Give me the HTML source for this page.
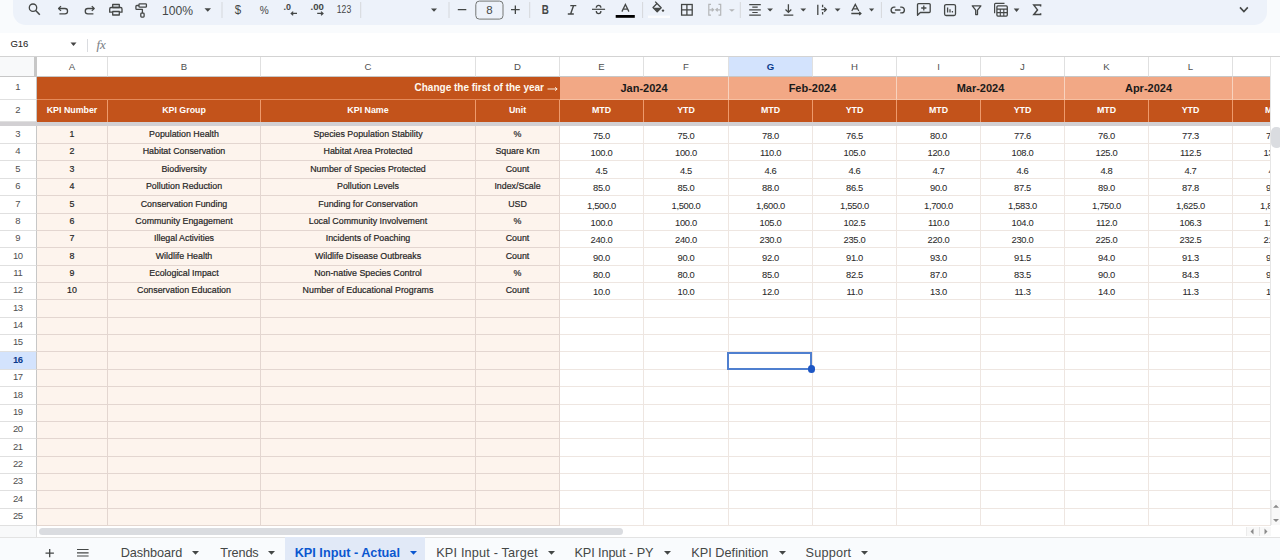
<!DOCTYPE html><html><head><meta charset="utf-8"><style>
*{margin:0;padding:0;box-sizing:border-box}
html,body{width:1280px;height:560px;overflow:hidden;background:#fff;font-family:"Liberation Sans",sans-serif;position:relative}
.ab{position:absolute}
.c{position:absolute;display:flex;align-items:center;justify-content:center;white-space:nowrap;overflow:hidden}
.ico{position:absolute}
.t{-webkit-text-stroke:0.2px #262626}
#grid{position:absolute;left:0;top:0;width:1271px;height:526px;overflow:hidden}
</style></head><body>
<div class="ab" style="left:0;top:0;width:1280px;height:33px;background:#f9fbfd"></div>
<div class="ab" style="left:13px;top:-20px;width:1254px;height:45px;background:#edf2fa;border-radius:13px"></div>
<svg class="ico" style="left:0;top:0" width="1280" height="25" viewBox="0 0 1280 25"><g fill="none" stroke="#444746" stroke-width="1.3" stroke-linecap="butt" stroke-linejoin="round"><circle cx="33" cy="7.7" r="3.7"/><path d="M35.7 10.4L39.8 14.8" stroke-width="1.5"/><path d="M58.8 8.5H64.9A2.65 2.65 0 0 1 64.9 13.8H59.4"/><path d="M61 6.1L58.6 8.5L61 10.9"/><g transform="translate(152.8 0) scale(-1 1)"><path d="M58.8 8.5H64.9A2.65 2.65 0 0 1 64.9 13.8H59.4"/><path d="M61 6.1L58.6 8.5L61 10.9"/></g><rect x="112.7" y="4.5" width="6.6" height="3" /><path d="M112.2 12.2H109.7V8.9A1.4 1.4 0 0 1 111.1 7.5H120.6A1.4 1.4 0 0 1 122 8.9V12.2H119.5"/><rect x="112.7" y="11.5" width="6.6" height="3.5"/><rect x="139" y="3.8" width="7.4" height="3.4" rx="0.8"/><path d="M139 5.5H136.8A0.9 0.9 0 0 0 135.9 6.4V8.5A0.9 0.9 0 0 0 136.8 9.4H142.4V13"/><rect x="140.8" y="13.2" width="3.3" height="3.9" rx="0.8"/></g><text x="162" y="15" font-size="12.2" fill="#444746" font-family="Liberation Sans" textLength="31" lengthAdjust="spacingAndGlyphs">100%</text><path d="M204.5 8.3H211L207.75 11.8Z" fill="#444746"/><rect x="221.5" y="2" width="1" height="16" fill="#d5d7db"/><text x="234.8" y="14" font-size="12" fill="#444746" font-family="Liberation Sans" textLength="6.4" lengthAdjust="spacingAndGlyphs">$</text><text x="259.8" y="13.5" font-size="10.5" fill="#444746" font-family="Liberation Sans" textLength="9" lengthAdjust="spacingAndGlyphs">%</text><text x="283.5" y="10.4" font-size="9.5" font-weight="bold" fill="#444746" font-family="Liberation Sans" textLength="7.5" lengthAdjust="spacingAndGlyphs">.0</text><path d="M297 13.4H291.2M293.2 11.6L291.2 13.4L293.2 15.2" stroke="#444746" stroke-width="1.2" fill="none"/><text x="310.5" y="10.4" font-size="9.5" font-weight="bold" fill="#444746" font-family="Liberation Sans" textLength="13.4" lengthAdjust="spacingAndGlyphs">.00</text><path d="M317.2 13.4H323M321 11.6L323 13.4L321 15.2" stroke="#444746" stroke-width="1.2" fill="none"/><text x="336.8" y="13" font-size="10" fill="#444746" font-family="Liberation Sans" textLength="14.4" lengthAdjust="spacingAndGlyphs">123</text><rect x="360.2" y="2" width="1" height="16" fill="#d5d7db"/><path d="M431 8.5H437L434.0 11.8Z" fill="#444746"/><rect x="448.5" y="2" width="1" height="16" fill="#d5d7db"/><path d="M457.8 9.7H466.3M511 9.7H519.7M515.35 5.4V14" stroke="#444746" stroke-width="1.3"/><rect x="475.8" y="1.1" width="27.2" height="18" rx="3.5" fill="none" stroke="#747775" stroke-width="1"/><text x="489.4" y="14" font-size="11.5" fill="#444746" font-family="Liberation Sans" text-anchor="middle">8</text><rect x="529.2" y="2" width="1" height="16" fill="#d5d7db"/><text x="541.8" y="13.9" font-size="12.4" font-weight="bold" fill="#444746" font-family="Liberation Sans" textLength="7.1" lengthAdjust="spacingAndGlyphs">B</text><path d="M570.3 5.6H576.3M567.8 14H573.8M573.6 5.6L570.6 14" stroke="#444746" stroke-width="1.4" fill="none"/><path d="M592 9.3H605.1" stroke="#444746" stroke-width="1.2"/><path d="M596.3 7.7A2.3 2.3 0 0 1 600.9 7.7M596.3 11A2.3 2.6 0 0 0 600.9 11" stroke="#444746" stroke-width="1.3" fill="none"/><path d="M621.9 11.6L625.4 4.4L628.9 11.6M623.2 9.1H627.6" stroke="#444746" stroke-width="1.3" fill="none"/><rect x="615.7" y="15" width="19.1" height="2.8" fill="#000"/><rect x="642.1" y="2" width="1" height="16" fill="#d5d7db"/><path d="M655.2 1.6L657.3 3.7M653 7.5L657 3.5L661.2 7.7L657.2 11.7Z" stroke="#444746" stroke-width="1.3" fill="none" stroke-linejoin="round"/><path d="M653.4 7.8H660.9L657.2 11.5Z" fill="#444746"/><circle cx="663" cy="10.6" r="1.2" fill="#444746"/><rect x="648" y="15.6" width="22" height="2.4" fill="#fbfcfe"/><rect x="681.6" y="4.5" width="10.6" height="10.6" stroke="#444746" stroke-width="1.3" fill="none"/><path d="M686.9 4.5V15.1M681.6 9.8H692.2" stroke="#444746" stroke-width="1.3"/><path d="M711 4.4H708.8V15.2H711M718.5 4.4H720.7V15.2H718.5M709.5 9.8H713.5M711.8 8.2L713.6 9.8L711.8 11.4M720 9.8H716M717.7 8.2L715.9 9.8L717.7 11.4" stroke="#b4b6b8" stroke-width="1.2" fill="none"/><path d="M729 9.3H734.8L731.9 11.8Z" fill="#b4b6b8"/><rect x="739.8" y="2" width="1" height="16" fill="#d5d7db"/><path d="M749.2 4.6H760.8M752.3 7.1H757.7M749.2 9.8H760.8M752.3 12.5H757.7M749.2 15.1H760.8" stroke="#444746" stroke-width="1.2"/><path d="M767.2 8.4H773L770.1 11.6Z" fill="#444746"/><path d="M788.4 4.2V12.3M785.5 9.5L788.4 12.4L791.3 9.5M783.7 15.2H793.3" stroke="#444746" stroke-width="1.3" fill="none"/><path d="M800.4 8.4H806.2L803.3 11.6Z" fill="#444746"/><path d="M817.8 4.7V14.9M821.5 9.6H826.2M824.2 7.5L826.3 9.6L824.2 11.7M822.6 4.8V7.2M822.6 12V14.6" stroke="#444746" stroke-width="1.3" fill="none"/><path d="M834.7 8.4H840.5L837.6 11.6Z" fill="#444746"/><path d="M851.8 11L855.3 4.4L858.8 11M853 8.9H857.6M851.3 13.5H860.8M859.2 11.9L860.9 13.5L859.2 15.1" stroke="#444746" stroke-width="1.3" fill="none"/><path d="M869 8.4H874.2L871.6 11.6Z" fill="#444746"/><rect x="880.9" y="2" width="1" height="16" fill="#d5d7db"/><path d="M895.4 7.1H894A2.85 2.85 0 0 0 894 12.9H895.4M900.2 7.1H901.5A2.85 2.85 0 0 1 901.5 12.9H900.2M894.9 10H900.5" stroke="#444746" stroke-width="1.4" fill="none"/><path d="M917.5 15.3V4.7A1 1 0 0 1 918.5 3.7H929.2A1 1 0 0 1 930.2 4.7V11.5A1 1 0 0 1 929.2 12.5H920.3Z" stroke="#444746" stroke-width="1.3" fill="none" stroke-linejoin="round"/><path d="M923.8 5.4V10.6M921.2 8H926.4" stroke="#444746" stroke-width="1.3"/><rect x="944.6" y="4.6" width="10.9" height="10.9" rx="1.5" stroke="#444746" stroke-width="1.3" fill="none"/><path d="M947.6 7.6V12.6M950 9.3V12.6M952.4 11V12.6" stroke="#444746" stroke-width="1.3"/><path d="M972.3 5.8H980.9L977.5 10.2V14.6H975.7V10.2Z" stroke="#444746" stroke-width="1.3" fill="none" stroke-linejoin="round"/><path d="M994.6 13.2V4.3A0.9 0.9 0 0 1 995.5 3.4H1004.5" stroke="#444746" stroke-width="1.2" fill="none"/><rect x="996.9" y="5.9" width="10.4" height="10.2" rx="1" stroke="#444746" stroke-width="1.3" fill="none"/><path d="M997 9.1H1007.2M1000.3 9.1V16M1003.8 9.1V16M997 12.6H1007.2" stroke="#444746" stroke-width="1.1"/><path d="M1013.75 8.5H1019.4L1016.575 11.9Z" fill="#444746"/><path d="M1040.6 6.4V5.1H1033.8L1037.5 9.9L1033.8 14.6H1040.6V13.3" stroke="#444746" stroke-width="1.5" fill="none" stroke-linejoin="miter"/><path d="M1240 7.4L1243.9 11.5L1247.8 7.4" stroke="#444746" stroke-width="1.6" fill="none"/></svg>
<div class="ab" style="left:0;top:33px;width:1280px;height:24px;background:#fff;border-bottom:1px solid #d3d3d3"></div>
<div class="ab" style="left:10.5px;top:37.5px;font-size:9.6px;line-height:12px;color:#1f1f1f;-webkit-text-stroke:0.05px #1f1f1f;letter-spacing:-0.1px">G16</div>
<svg class="ico" style="left:70px;top:42px" width="7" height="5" viewBox="0 0 7 5"><path d="M0.5 0.5h6L3.5 4z" fill="#444"/></svg>
<div class="ab" style="left:87px;top:39px;width:1px;height:13px;background:#dadce0"></div>
<div class="ab" style="left:96.5px;top:37.5px;font-size:13px;line-height:14px;color:#7d8288;font-family:'Liberation Serif',serif;font-style:italic;letter-spacing:0px;-webkit-text-stroke:0.1px #7d8288">fx</div>
<div id="grid">
<div class="ab" style="left:0;top:57px;width:37px;height:20px;background:#f8f9fa;border-bottom:1px solid #c7c7c7"></div>
<div class="ab" style="left:34px;top:57px;width:3px;height:20px;background:#c7c7c7"></div>
<div class="c" style="left:37px;top:57px;width:71px;height:20px;background:#fff;border-right:1px solid #e0e0e0;border-bottom:1px solid #c7c7c7;font-size:9.6px;color:#505050;font-weight:normal;padding-top:0px">A</div>
<div class="c" style="left:108px;top:57px;width:153px;height:20px;background:#fff;border-right:1px solid #e0e0e0;border-bottom:1px solid #c7c7c7;font-size:9.6px;color:#505050;font-weight:normal;padding-top:0px">B</div>
<div class="c" style="left:261px;top:57px;width:215px;height:20px;background:#fff;border-right:1px solid #e0e0e0;border-bottom:1px solid #c7c7c7;font-size:9.6px;color:#505050;font-weight:normal;padding-top:0px">C</div>
<div class="c" style="left:476px;top:57px;width:84px;height:20px;background:#fff;border-right:1px solid #e0e0e0;border-bottom:1px solid #c7c7c7;font-size:9.6px;color:#505050;font-weight:normal;padding-top:0px">D</div>
<div class="c" style="left:560px;top:57px;width:84px;height:20px;background:#fff;border-right:1px solid #e0e0e0;border-bottom:1px solid #c7c7c7;font-size:9.6px;color:#505050;font-weight:normal;padding-top:0px">E</div>
<div class="c" style="left:644px;top:57px;width:85px;height:20px;background:#fff;border-right:1px solid #e0e0e0;border-bottom:1px solid #c7c7c7;font-size:9.6px;color:#505050;font-weight:normal;padding-top:0px">F</div>
<div class="c" style="left:729px;top:57px;width:84px;height:20px;background:#d3e3fd;border-right:1px solid #e0e0e0;border-bottom:1px solid #c7c7c7;font-size:9.6px;color:#0b3a8c;font-weight:bold;padding-top:0px">G</div>
<div class="c" style="left:813px;top:57px;width:84px;height:20px;background:#fff;border-right:1px solid #e0e0e0;border-bottom:1px solid #c7c7c7;font-size:9.6px;color:#505050;font-weight:normal;padding-top:0px">H</div>
<div class="c" style="left:897px;top:57px;width:84px;height:20px;background:#fff;border-right:1px solid #e0e0e0;border-bottom:1px solid #c7c7c7;font-size:9.6px;color:#505050;font-weight:normal;padding-top:0px">I</div>
<div class="c" style="left:981px;top:57px;width:84px;height:20px;background:#fff;border-right:1px solid #e0e0e0;border-bottom:1px solid #c7c7c7;font-size:9.6px;color:#505050;font-weight:normal;padding-top:0px">J</div>
<div class="c" style="left:1065px;top:57px;width:84px;height:20px;background:#fff;border-right:1px solid #e0e0e0;border-bottom:1px solid #c7c7c7;font-size:9.6px;color:#505050;font-weight:normal;padding-top:0px">K</div>
<div class="c" style="left:1149px;top:57px;width:84px;height:20px;background:#fff;border-right:1px solid #e0e0e0;border-bottom:1px solid #c7c7c7;font-size:9.6px;color:#505050;font-weight:normal;padding-top:0px">L</div>
<div class="c" style="left:1233px;top:57px;width:84px;height:20px;background:#fff;border-right:1px solid #e0e0e0;border-bottom:1px solid #c7c7c7;font-size:9.6px;color:#505050;font-weight:normal;padding-top:0px">M</div>
<div class="c" style="left:0;top:77px;width:37px;height:23px;background:#fff;border-right:1px solid #c7c7c7;border-bottom:1px solid #e0e0e0;font-size:9.5px;letter-spacing:-0.4px;text-indent:-0.4px;color:#505050;font-weight:normal;padding-bottom:3px">1</div>
<div class="c" style="left:0;top:100px;width:37px;height:22px;background:#fff;border-right:1px solid #c7c7c7;border-bottom:1px solid #e0e0e0;font-size:9.5px;letter-spacing:-0.4px;text-indent:-0.4px;color:#505050;font-weight:normal;padding-bottom:3px">2</div>
<div class="c" style="left:0;top:126px;width:37px;height:18px;background:#fff;border-right:1px solid #c7c7c7;border-bottom:1px solid #e0e0e0;font-size:9.5px;letter-spacing:-0.4px;text-indent:-0.4px;color:#505050;font-weight:normal;padding-bottom:3px">3</div>
<div class="c" style="left:0;top:144px;width:37px;height:17px;background:#fff;border-right:1px solid #c7c7c7;border-bottom:1px solid #e0e0e0;font-size:9.5px;letter-spacing:-0.4px;text-indent:-0.4px;color:#505050;font-weight:normal;padding-bottom:3px">4</div>
<div class="c" style="left:0;top:161px;width:37px;height:18px;background:#fff;border-right:1px solid #c7c7c7;border-bottom:1px solid #e0e0e0;font-size:9.5px;letter-spacing:-0.4px;text-indent:-0.4px;color:#505050;font-weight:normal;padding-bottom:3px">5</div>
<div class="c" style="left:0;top:179px;width:37px;height:17px;background:#fff;border-right:1px solid #c7c7c7;border-bottom:1px solid #e0e0e0;font-size:9.5px;letter-spacing:-0.4px;text-indent:-0.4px;color:#505050;font-weight:normal;padding-bottom:3px">6</div>
<div class="c" style="left:0;top:196px;width:37px;height:18px;background:#fff;border-right:1px solid #c7c7c7;border-bottom:1px solid #e0e0e0;font-size:9.5px;letter-spacing:-0.4px;text-indent:-0.4px;color:#505050;font-weight:normal;padding-bottom:3px">7</div>
<div class="c" style="left:0;top:214px;width:37px;height:17px;background:#fff;border-right:1px solid #c7c7c7;border-bottom:1px solid #e0e0e0;font-size:9.5px;letter-spacing:-0.4px;text-indent:-0.4px;color:#505050;font-weight:normal;padding-bottom:3px">8</div>
<div class="c" style="left:0;top:231px;width:37px;height:17px;background:#fff;border-right:1px solid #c7c7c7;border-bottom:1px solid #e0e0e0;font-size:9.5px;letter-spacing:-0.4px;text-indent:-0.4px;color:#505050;font-weight:normal;padding-bottom:3px">9</div>
<div class="c" style="left:0;top:248px;width:37px;height:18px;background:#fff;border-right:1px solid #c7c7c7;border-bottom:1px solid #e0e0e0;font-size:9.5px;letter-spacing:-0.4px;text-indent:-0.4px;color:#505050;font-weight:normal;padding-bottom:3px">10</div>
<div class="c" style="left:0;top:266px;width:37px;height:17px;background:#fff;border-right:1px solid #c7c7c7;border-bottom:1px solid #e0e0e0;font-size:9.5px;letter-spacing:-0.4px;text-indent:-0.4px;color:#505050;font-weight:normal;padding-bottom:3px">11</div>
<div class="c" style="left:0;top:283px;width:37px;height:17px;background:#fff;border-right:1px solid #c7c7c7;border-bottom:1px solid #e0e0e0;font-size:9.5px;letter-spacing:-0.4px;text-indent:-0.4px;color:#505050;font-weight:normal;padding-bottom:3px">12</div>
<div class="c" style="left:0;top:300px;width:37px;height:18px;background:#fff;border-right:1px solid #c7c7c7;border-bottom:1px solid #e0e0e0;font-size:9.5px;letter-spacing:-0.4px;text-indent:-0.4px;color:#505050;font-weight:normal;padding-bottom:3px">13</div>
<div class="c" style="left:0;top:318px;width:37px;height:17px;background:#fff;border-right:1px solid #c7c7c7;border-bottom:1px solid #e0e0e0;font-size:9.5px;letter-spacing:-0.4px;text-indent:-0.4px;color:#505050;font-weight:normal;padding-bottom:3px">14</div>
<div class="c" style="left:0;top:335px;width:37px;height:17px;background:#fff;border-right:1px solid #c7c7c7;border-bottom:1px solid #e0e0e0;font-size:9.5px;letter-spacing:-0.4px;text-indent:-0.4px;color:#505050;font-weight:normal;padding-bottom:3px">15</div>
<div class="c" style="left:0;top:352px;width:37px;height:18px;background:#d3e3fd;border-right:1px solid #c7c7c7;border-bottom:1px solid #e0e0e0;font-size:9.5px;letter-spacing:-0.4px;text-indent:-0.4px;color:#0b3a8c;font-weight:bold;padding-bottom:3px">16</div>
<div class="c" style="left:0;top:370px;width:37px;height:17px;background:#fff;border-right:1px solid #c7c7c7;border-bottom:1px solid #e0e0e0;font-size:9.5px;letter-spacing:-0.4px;text-indent:-0.4px;color:#505050;font-weight:normal;padding-bottom:3px">17</div>
<div class="c" style="left:0;top:387px;width:37px;height:18px;background:#fff;border-right:1px solid #c7c7c7;border-bottom:1px solid #e0e0e0;font-size:9.5px;letter-spacing:-0.4px;text-indent:-0.4px;color:#505050;font-weight:normal;padding-bottom:3px">18</div>
<div class="c" style="left:0;top:405px;width:37px;height:17px;background:#fff;border-right:1px solid #c7c7c7;border-bottom:1px solid #e0e0e0;font-size:9.5px;letter-spacing:-0.4px;text-indent:-0.4px;color:#505050;font-weight:normal;padding-bottom:3px">19</div>
<div class="c" style="left:0;top:422px;width:37px;height:17px;background:#fff;border-right:1px solid #c7c7c7;border-bottom:1px solid #e0e0e0;font-size:9.5px;letter-spacing:-0.4px;text-indent:-0.4px;color:#505050;font-weight:normal;padding-bottom:3px">20</div>
<div class="c" style="left:0;top:439px;width:37px;height:18px;background:#fff;border-right:1px solid #c7c7c7;border-bottom:1px solid #e0e0e0;font-size:9.5px;letter-spacing:-0.4px;text-indent:-0.4px;color:#505050;font-weight:normal;padding-bottom:3px">21</div>
<div class="c" style="left:0;top:457px;width:37px;height:17px;background:#fff;border-right:1px solid #c7c7c7;border-bottom:1px solid #e0e0e0;font-size:9.5px;letter-spacing:-0.4px;text-indent:-0.4px;color:#505050;font-weight:normal;padding-bottom:3px">22</div>
<div class="c" style="left:0;top:474px;width:37px;height:17px;background:#fff;border-right:1px solid #c7c7c7;border-bottom:1px solid #e0e0e0;font-size:9.5px;letter-spacing:-0.4px;text-indent:-0.4px;color:#505050;font-weight:normal;padding-bottom:3px">23</div>
<div class="c" style="left:0;top:491px;width:37px;height:18px;background:#fff;border-right:1px solid #c7c7c7;border-bottom:1px solid #e0e0e0;font-size:9.5px;letter-spacing:-0.4px;text-indent:-0.4px;color:#505050;font-weight:normal;padding-bottom:3px">24</div>
<div class="c" style="left:0;top:509px;width:37px;height:17px;background:#fff;border-right:1px solid #c7c7c7;border-bottom:1px solid #e0e0e0;font-size:9.5px;letter-spacing:-0.4px;text-indent:-0.4px;color:#505050;font-weight:normal;padding-bottom:3px">25</div>
<div class="c" style="left:37px;top:77px;width:523px;height:23px;background:#c3531b;border-bottom:1px solid #e58a5a;justify-content:flex-end;padding-right:2px;padding-bottom:2px;color:#fff8ee;font-weight:bold;font-size:10px">Change the first of the year<svg style="margin-left:3px;margin-top:3px" width="11" height="6" viewBox="0 0 11 6"><path d="M0.5 3H10M8 1.3L10.2 3L8 4.7" stroke="#fff8ee" stroke-width="0.9" fill="none"/></svg></div>
<div class="c" style="left:560px;top:77px;width:169px;height:23px;background:#f2a885;border-right:1px solid #f8d3bf;border-bottom:1px solid #f6c0a2;color:#1a1a1a;font-weight:bold;font-size:11px">Jan-2024</div>
<div class="c" style="left:729px;top:77px;width:168px;height:23px;background:#f2a885;border-right:1px solid #f8d3bf;border-bottom:1px solid #f6c0a2;color:#1a1a1a;font-weight:bold;font-size:11px">Feb-2024</div>
<div class="c" style="left:897px;top:77px;width:168px;height:23px;background:#f2a885;border-right:1px solid #f8d3bf;border-bottom:1px solid #f6c0a2;color:#1a1a1a;font-weight:bold;font-size:11px">Mar-2024</div>
<div class="c" style="left:1065px;top:77px;width:168px;height:23px;background:#f2a885;border-right:1px solid #f8d3bf;border-bottom:1px solid #f6c0a2;color:#1a1a1a;font-weight:bold;font-size:11px">Apr-2024</div>
<div class="c" style="left:1233px;top:77px;width:168px;height:23px;background:#f2a885;border-right:1px solid #f8d3bf;border-bottom:1px solid #f6c0a2;color:#1a1a1a;font-weight:bold;font-size:11px">May-2024</div>
<div class="c" style="left:37px;top:100px;width:71px;height:22px;background:#c3531b;border-right:1px solid #ee9a6c;color:#fff;font-weight:bold;font-size:8.85px;padding-bottom:2px">KPI Number</div>
<div class="c" style="left:108px;top:100px;width:153px;height:22px;background:#c3531b;border-right:1px solid #ee9a6c;color:#fff;font-weight:bold;font-size:8.85px;padding-bottom:2px">KPI Group</div>
<div class="c" style="left:261px;top:100px;width:215px;height:22px;background:#c3531b;border-right:1px solid #ee9a6c;color:#fff;font-weight:bold;font-size:8.85px;padding-bottom:2px">KPI Name</div>
<div class="c" style="left:476px;top:100px;width:84px;height:22px;background:#c3531b;border-right:1px solid #ee9a6c;color:#fff;font-weight:bold;font-size:8.85px;padding-bottom:2px">Unit</div>
<div class="c" style="left:560px;top:100px;width:84px;height:22px;background:#c3531b;border-right:1px solid #ee9a6c;color:#fff;font-weight:bold;font-size:8.85px;padding-bottom:2px">MTD</div>
<div class="c" style="left:644px;top:100px;width:85px;height:22px;background:#c3531b;border-right:1px solid #ee9a6c;color:#fff;font-weight:bold;font-size:8.85px;padding-bottom:2px">YTD</div>
<div class="c" style="left:729px;top:100px;width:84px;height:22px;background:#c3531b;border-right:1px solid #ee9a6c;color:#fff;font-weight:bold;font-size:8.85px;padding-bottom:2px">MTD</div>
<div class="c" style="left:813px;top:100px;width:84px;height:22px;background:#c3531b;border-right:1px solid #ee9a6c;color:#fff;font-weight:bold;font-size:8.85px;padding-bottom:2px">YTD</div>
<div class="c" style="left:897px;top:100px;width:84px;height:22px;background:#c3531b;border-right:1px solid #ee9a6c;color:#fff;font-weight:bold;font-size:8.85px;padding-bottom:2px">MTD</div>
<div class="c" style="left:981px;top:100px;width:84px;height:22px;background:#c3531b;border-right:1px solid #ee9a6c;color:#fff;font-weight:bold;font-size:8.85px;padding-bottom:2px">YTD</div>
<div class="c" style="left:1065px;top:100px;width:84px;height:22px;background:#c3531b;border-right:1px solid #ee9a6c;color:#fff;font-weight:bold;font-size:8.85px;padding-bottom:2px">MTD</div>
<div class="c" style="left:1149px;top:100px;width:84px;height:22px;background:#c3531b;border-right:1px solid #ee9a6c;color:#fff;font-weight:bold;font-size:8.85px;padding-bottom:2px">YTD</div>
<div class="c" style="left:1233px;top:100px;width:84px;height:22px;background:#c3531b;border-right:1px solid #ee9a6c;color:#fff;font-weight:bold;font-size:8.85px;padding-bottom:2px">MTD</div>
<div class="ab" style="left:0;top:122px;width:1271px;height:4px;background:#d2d0d3"></div>
<div class="c t" style="left:37px;top:126px;width:71px;height:18px;background:#fdf4ed;border-right:1px solid #e3d6d0;border-bottom:1px solid #e3d6d0;font-size:8.85px;color:#262626;padding-bottom:2px">1</div>
<div class="c t" style="left:108px;top:126px;width:153px;height:18px;background:#fdf4ed;border-right:1px solid #e3d6d0;border-bottom:1px solid #e3d6d0;font-size:8.85px;color:#262626;padding-bottom:2px">Population Health</div>
<div class="c t" style="left:261px;top:126px;width:215px;height:18px;background:#fdf4ed;border-right:1px solid #e3d6d0;border-bottom:1px solid #e3d6d0;font-size:8.85px;color:#262626;padding-bottom:2px">Species Population Stability</div>
<div class="c t" style="left:476px;top:126px;width:84px;height:18px;background:#fdf4ed;border-right:1px solid #e3d6d0;border-bottom:1px solid #e3d6d0;font-size:8.85px;color:#262626;padding-bottom:2px">%</div>
<div class="c t" style="left:560px;top:126px;width:84px;height:18px;background:#fff;border-right:1px solid #eee6e1;border-bottom:1px solid #eee6e1;font-size:9.4px;letter-spacing:-0.34px;color:#2a2a2a;-webkit-text-stroke:0.05px #2a2a2a;align-items:flex-end;padding-bottom:2.5px">75.0</div>
<div class="c t" style="left:644px;top:126px;width:85px;height:18px;background:#fff;border-right:1px solid #eee6e1;border-bottom:1px solid #eee6e1;font-size:9.4px;letter-spacing:-0.34px;color:#2a2a2a;-webkit-text-stroke:0.05px #2a2a2a;align-items:flex-end;padding-bottom:2.5px">75.0</div>
<div class="c t" style="left:729px;top:126px;width:84px;height:18px;background:#fff;border-right:1px solid #eee6e1;border-bottom:1px solid #eee6e1;font-size:9.4px;letter-spacing:-0.34px;color:#2a2a2a;-webkit-text-stroke:0.05px #2a2a2a;align-items:flex-end;padding-bottom:2.5px">78.0</div>
<div class="c t" style="left:813px;top:126px;width:84px;height:18px;background:#fff;border-right:1px solid #eee6e1;border-bottom:1px solid #eee6e1;font-size:9.4px;letter-spacing:-0.34px;color:#2a2a2a;-webkit-text-stroke:0.05px #2a2a2a;align-items:flex-end;padding-bottom:2.5px">76.5</div>
<div class="c t" style="left:897px;top:126px;width:84px;height:18px;background:#fff;border-right:1px solid #eee6e1;border-bottom:1px solid #eee6e1;font-size:9.4px;letter-spacing:-0.34px;color:#2a2a2a;-webkit-text-stroke:0.05px #2a2a2a;align-items:flex-end;padding-bottom:2.5px">80.0</div>
<div class="c t" style="left:981px;top:126px;width:84px;height:18px;background:#fff;border-right:1px solid #eee6e1;border-bottom:1px solid #eee6e1;font-size:9.4px;letter-spacing:-0.34px;color:#2a2a2a;-webkit-text-stroke:0.05px #2a2a2a;align-items:flex-end;padding-bottom:2.5px">77.6</div>
<div class="c t" style="left:1065px;top:126px;width:84px;height:18px;background:#fff;border-right:1px solid #eee6e1;border-bottom:1px solid #eee6e1;font-size:9.4px;letter-spacing:-0.34px;color:#2a2a2a;-webkit-text-stroke:0.05px #2a2a2a;align-items:flex-end;padding-bottom:2.5px">76.0</div>
<div class="c t" style="left:1149px;top:126px;width:84px;height:18px;background:#fff;border-right:1px solid #eee6e1;border-bottom:1px solid #eee6e1;font-size:9.4px;letter-spacing:-0.34px;color:#2a2a2a;-webkit-text-stroke:0.05px #2a2a2a;align-items:flex-end;padding-bottom:2.5px">77.3</div>
<div class="c t" style="left:1233px;top:126px;width:84px;height:18px;background:#fff;border-right:1px solid #eee6e1;border-bottom:1px solid #eee6e1;font-size:9.4px;letter-spacing:-0.34px;color:#2a2a2a;-webkit-text-stroke:0.05px #2a2a2a;align-items:flex-end;padding-bottom:2.5px">79.0</div>
<div class="c t" style="left:37px;top:144px;width:71px;height:17px;background:#fdf4ed;border-right:1px solid #e3d6d0;border-bottom:1px solid #e3d6d0;font-size:8.85px;color:#262626;padding-bottom:2px">2</div>
<div class="c t" style="left:108px;top:144px;width:153px;height:17px;background:#fdf4ed;border-right:1px solid #e3d6d0;border-bottom:1px solid #e3d6d0;font-size:8.85px;color:#262626;padding-bottom:2px">Habitat Conservation</div>
<div class="c t" style="left:261px;top:144px;width:215px;height:17px;background:#fdf4ed;border-right:1px solid #e3d6d0;border-bottom:1px solid #e3d6d0;font-size:8.85px;color:#262626;padding-bottom:2px">Habitat Area Protected</div>
<div class="c t" style="left:476px;top:144px;width:84px;height:17px;background:#fdf4ed;border-right:1px solid #e3d6d0;border-bottom:1px solid #e3d6d0;font-size:8.85px;color:#262626;padding-bottom:2px">Square Km</div>
<div class="c t" style="left:560px;top:144px;width:84px;height:17px;background:#fff;border-right:1px solid #eee6e1;border-bottom:1px solid #eee6e1;font-size:9.4px;letter-spacing:-0.34px;color:#2a2a2a;-webkit-text-stroke:0.05px #2a2a2a;align-items:flex-end;padding-bottom:2.5px">100.0</div>
<div class="c t" style="left:644px;top:144px;width:85px;height:17px;background:#fff;border-right:1px solid #eee6e1;border-bottom:1px solid #eee6e1;font-size:9.4px;letter-spacing:-0.34px;color:#2a2a2a;-webkit-text-stroke:0.05px #2a2a2a;align-items:flex-end;padding-bottom:2.5px">100.0</div>
<div class="c t" style="left:729px;top:144px;width:84px;height:17px;background:#fff;border-right:1px solid #eee6e1;border-bottom:1px solid #eee6e1;font-size:9.4px;letter-spacing:-0.34px;color:#2a2a2a;-webkit-text-stroke:0.05px #2a2a2a;align-items:flex-end;padding-bottom:2.5px">110.0</div>
<div class="c t" style="left:813px;top:144px;width:84px;height:17px;background:#fff;border-right:1px solid #eee6e1;border-bottom:1px solid #eee6e1;font-size:9.4px;letter-spacing:-0.34px;color:#2a2a2a;-webkit-text-stroke:0.05px #2a2a2a;align-items:flex-end;padding-bottom:2.5px">105.0</div>
<div class="c t" style="left:897px;top:144px;width:84px;height:17px;background:#fff;border-right:1px solid #eee6e1;border-bottom:1px solid #eee6e1;font-size:9.4px;letter-spacing:-0.34px;color:#2a2a2a;-webkit-text-stroke:0.05px #2a2a2a;align-items:flex-end;padding-bottom:2.5px">120.0</div>
<div class="c t" style="left:981px;top:144px;width:84px;height:17px;background:#fff;border-right:1px solid #eee6e1;border-bottom:1px solid #eee6e1;font-size:9.4px;letter-spacing:-0.34px;color:#2a2a2a;-webkit-text-stroke:0.05px #2a2a2a;align-items:flex-end;padding-bottom:2.5px">108.0</div>
<div class="c t" style="left:1065px;top:144px;width:84px;height:17px;background:#fff;border-right:1px solid #eee6e1;border-bottom:1px solid #eee6e1;font-size:9.4px;letter-spacing:-0.34px;color:#2a2a2a;-webkit-text-stroke:0.05px #2a2a2a;align-items:flex-end;padding-bottom:2.5px">125.0</div>
<div class="c t" style="left:1149px;top:144px;width:84px;height:17px;background:#fff;border-right:1px solid #eee6e1;border-bottom:1px solid #eee6e1;font-size:9.4px;letter-spacing:-0.34px;color:#2a2a2a;-webkit-text-stroke:0.05px #2a2a2a;align-items:flex-end;padding-bottom:2.5px">112.5</div>
<div class="c t" style="left:1233px;top:144px;width:84px;height:17px;background:#fff;border-right:1px solid #eee6e1;border-bottom:1px solid #eee6e1;font-size:9.4px;letter-spacing:-0.34px;color:#2a2a2a;-webkit-text-stroke:0.05px #2a2a2a;align-items:flex-end;padding-bottom:2.5px">130.0</div>
<div class="c t" style="left:37px;top:161px;width:71px;height:18px;background:#fdf4ed;border-right:1px solid #e3d6d0;border-bottom:1px solid #e3d6d0;font-size:8.85px;color:#262626;padding-bottom:2px">3</div>
<div class="c t" style="left:108px;top:161px;width:153px;height:18px;background:#fdf4ed;border-right:1px solid #e3d6d0;border-bottom:1px solid #e3d6d0;font-size:8.85px;color:#262626;padding-bottom:2px">Biodiversity</div>
<div class="c t" style="left:261px;top:161px;width:215px;height:18px;background:#fdf4ed;border-right:1px solid #e3d6d0;border-bottom:1px solid #e3d6d0;font-size:8.85px;color:#262626;padding-bottom:2px">Number of Species Protected</div>
<div class="c t" style="left:476px;top:161px;width:84px;height:18px;background:#fdf4ed;border-right:1px solid #e3d6d0;border-bottom:1px solid #e3d6d0;font-size:8.85px;color:#262626;padding-bottom:2px">Count</div>
<div class="c t" style="left:560px;top:161px;width:84px;height:18px;background:#fff;border-right:1px solid #eee6e1;border-bottom:1px solid #eee6e1;font-size:9.4px;letter-spacing:-0.34px;color:#2a2a2a;-webkit-text-stroke:0.05px #2a2a2a;align-items:flex-end;padding-bottom:2.5px">4.5</div>
<div class="c t" style="left:644px;top:161px;width:85px;height:18px;background:#fff;border-right:1px solid #eee6e1;border-bottom:1px solid #eee6e1;font-size:9.4px;letter-spacing:-0.34px;color:#2a2a2a;-webkit-text-stroke:0.05px #2a2a2a;align-items:flex-end;padding-bottom:2.5px">4.5</div>
<div class="c t" style="left:729px;top:161px;width:84px;height:18px;background:#fff;border-right:1px solid #eee6e1;border-bottom:1px solid #eee6e1;font-size:9.4px;letter-spacing:-0.34px;color:#2a2a2a;-webkit-text-stroke:0.05px #2a2a2a;align-items:flex-end;padding-bottom:2.5px">4.6</div>
<div class="c t" style="left:813px;top:161px;width:84px;height:18px;background:#fff;border-right:1px solid #eee6e1;border-bottom:1px solid #eee6e1;font-size:9.4px;letter-spacing:-0.34px;color:#2a2a2a;-webkit-text-stroke:0.05px #2a2a2a;align-items:flex-end;padding-bottom:2.5px">4.6</div>
<div class="c t" style="left:897px;top:161px;width:84px;height:18px;background:#fff;border-right:1px solid #eee6e1;border-bottom:1px solid #eee6e1;font-size:9.4px;letter-spacing:-0.34px;color:#2a2a2a;-webkit-text-stroke:0.05px #2a2a2a;align-items:flex-end;padding-bottom:2.5px">4.7</div>
<div class="c t" style="left:981px;top:161px;width:84px;height:18px;background:#fff;border-right:1px solid #eee6e1;border-bottom:1px solid #eee6e1;font-size:9.4px;letter-spacing:-0.34px;color:#2a2a2a;-webkit-text-stroke:0.05px #2a2a2a;align-items:flex-end;padding-bottom:2.5px">4.6</div>
<div class="c t" style="left:1065px;top:161px;width:84px;height:18px;background:#fff;border-right:1px solid #eee6e1;border-bottom:1px solid #eee6e1;font-size:9.4px;letter-spacing:-0.34px;color:#2a2a2a;-webkit-text-stroke:0.05px #2a2a2a;align-items:flex-end;padding-bottom:2.5px">4.8</div>
<div class="c t" style="left:1149px;top:161px;width:84px;height:18px;background:#fff;border-right:1px solid #eee6e1;border-bottom:1px solid #eee6e1;font-size:9.4px;letter-spacing:-0.34px;color:#2a2a2a;-webkit-text-stroke:0.05px #2a2a2a;align-items:flex-end;padding-bottom:2.5px">4.7</div>
<div class="c t" style="left:1233px;top:161px;width:84px;height:18px;background:#fff;border-right:1px solid #eee6e1;border-bottom:1px solid #eee6e1;font-size:9.4px;letter-spacing:-0.34px;color:#2a2a2a;-webkit-text-stroke:0.05px #2a2a2a;align-items:flex-end;padding-bottom:2.5px">4.9</div>
<div class="c t" style="left:37px;top:179px;width:71px;height:17px;background:#fdf4ed;border-right:1px solid #e3d6d0;border-bottom:1px solid #e3d6d0;font-size:8.85px;color:#262626;padding-bottom:2px">4</div>
<div class="c t" style="left:108px;top:179px;width:153px;height:17px;background:#fdf4ed;border-right:1px solid #e3d6d0;border-bottom:1px solid #e3d6d0;font-size:8.85px;color:#262626;padding-bottom:2px">Pollution Reduction</div>
<div class="c t" style="left:261px;top:179px;width:215px;height:17px;background:#fdf4ed;border-right:1px solid #e3d6d0;border-bottom:1px solid #e3d6d0;font-size:8.85px;color:#262626;padding-bottom:2px">Pollution Levels</div>
<div class="c t" style="left:476px;top:179px;width:84px;height:17px;background:#fdf4ed;border-right:1px solid #e3d6d0;border-bottom:1px solid #e3d6d0;font-size:8.85px;color:#262626;padding-bottom:2px">Index/Scale</div>
<div class="c t" style="left:560px;top:179px;width:84px;height:17px;background:#fff;border-right:1px solid #eee6e1;border-bottom:1px solid #eee6e1;font-size:9.4px;letter-spacing:-0.34px;color:#2a2a2a;-webkit-text-stroke:0.05px #2a2a2a;align-items:flex-end;padding-bottom:2.5px">85.0</div>
<div class="c t" style="left:644px;top:179px;width:85px;height:17px;background:#fff;border-right:1px solid #eee6e1;border-bottom:1px solid #eee6e1;font-size:9.4px;letter-spacing:-0.34px;color:#2a2a2a;-webkit-text-stroke:0.05px #2a2a2a;align-items:flex-end;padding-bottom:2.5px">85.0</div>
<div class="c t" style="left:729px;top:179px;width:84px;height:17px;background:#fff;border-right:1px solid #eee6e1;border-bottom:1px solid #eee6e1;font-size:9.4px;letter-spacing:-0.34px;color:#2a2a2a;-webkit-text-stroke:0.05px #2a2a2a;align-items:flex-end;padding-bottom:2.5px">88.0</div>
<div class="c t" style="left:813px;top:179px;width:84px;height:17px;background:#fff;border-right:1px solid #eee6e1;border-bottom:1px solid #eee6e1;font-size:9.4px;letter-spacing:-0.34px;color:#2a2a2a;-webkit-text-stroke:0.05px #2a2a2a;align-items:flex-end;padding-bottom:2.5px">86.5</div>
<div class="c t" style="left:897px;top:179px;width:84px;height:17px;background:#fff;border-right:1px solid #eee6e1;border-bottom:1px solid #eee6e1;font-size:9.4px;letter-spacing:-0.34px;color:#2a2a2a;-webkit-text-stroke:0.05px #2a2a2a;align-items:flex-end;padding-bottom:2.5px">90.0</div>
<div class="c t" style="left:981px;top:179px;width:84px;height:17px;background:#fff;border-right:1px solid #eee6e1;border-bottom:1px solid #eee6e1;font-size:9.4px;letter-spacing:-0.34px;color:#2a2a2a;-webkit-text-stroke:0.05px #2a2a2a;align-items:flex-end;padding-bottom:2.5px">87.5</div>
<div class="c t" style="left:1065px;top:179px;width:84px;height:17px;background:#fff;border-right:1px solid #eee6e1;border-bottom:1px solid #eee6e1;font-size:9.4px;letter-spacing:-0.34px;color:#2a2a2a;-webkit-text-stroke:0.05px #2a2a2a;align-items:flex-end;padding-bottom:2.5px">89.0</div>
<div class="c t" style="left:1149px;top:179px;width:84px;height:17px;background:#fff;border-right:1px solid #eee6e1;border-bottom:1px solid #eee6e1;font-size:9.4px;letter-spacing:-0.34px;color:#2a2a2a;-webkit-text-stroke:0.05px #2a2a2a;align-items:flex-end;padding-bottom:2.5px">87.8</div>
<div class="c t" style="left:1233px;top:179px;width:84px;height:17px;background:#fff;border-right:1px solid #eee6e1;border-bottom:1px solid #eee6e1;font-size:9.4px;letter-spacing:-0.34px;color:#2a2a2a;-webkit-text-stroke:0.05px #2a2a2a;align-items:flex-end;padding-bottom:2.5px">92.0</div>
<div class="c t" style="left:37px;top:196px;width:71px;height:18px;background:#fdf4ed;border-right:1px solid #e3d6d0;border-bottom:1px solid #e3d6d0;font-size:8.85px;color:#262626;padding-bottom:2px">5</div>
<div class="c t" style="left:108px;top:196px;width:153px;height:18px;background:#fdf4ed;border-right:1px solid #e3d6d0;border-bottom:1px solid #e3d6d0;font-size:8.85px;color:#262626;padding-bottom:2px">Conservation Funding</div>
<div class="c t" style="left:261px;top:196px;width:215px;height:18px;background:#fdf4ed;border-right:1px solid #e3d6d0;border-bottom:1px solid #e3d6d0;font-size:8.85px;color:#262626;padding-bottom:2px">Funding for Conservation</div>
<div class="c t" style="left:476px;top:196px;width:84px;height:18px;background:#fdf4ed;border-right:1px solid #e3d6d0;border-bottom:1px solid #e3d6d0;font-size:8.85px;color:#262626;padding-bottom:2px">USD</div>
<div class="c t" style="left:560px;top:196px;width:84px;height:18px;background:#fff;border-right:1px solid #eee6e1;border-bottom:1px solid #eee6e1;font-size:9.4px;letter-spacing:-0.34px;color:#2a2a2a;-webkit-text-stroke:0.05px #2a2a2a;align-items:flex-end;padding-bottom:2.5px">1,500.0</div>
<div class="c t" style="left:644px;top:196px;width:85px;height:18px;background:#fff;border-right:1px solid #eee6e1;border-bottom:1px solid #eee6e1;font-size:9.4px;letter-spacing:-0.34px;color:#2a2a2a;-webkit-text-stroke:0.05px #2a2a2a;align-items:flex-end;padding-bottom:2.5px">1,500.0</div>
<div class="c t" style="left:729px;top:196px;width:84px;height:18px;background:#fff;border-right:1px solid #eee6e1;border-bottom:1px solid #eee6e1;font-size:9.4px;letter-spacing:-0.34px;color:#2a2a2a;-webkit-text-stroke:0.05px #2a2a2a;align-items:flex-end;padding-bottom:2.5px">1,600.0</div>
<div class="c t" style="left:813px;top:196px;width:84px;height:18px;background:#fff;border-right:1px solid #eee6e1;border-bottom:1px solid #eee6e1;font-size:9.4px;letter-spacing:-0.34px;color:#2a2a2a;-webkit-text-stroke:0.05px #2a2a2a;align-items:flex-end;padding-bottom:2.5px">1,550.0</div>
<div class="c t" style="left:897px;top:196px;width:84px;height:18px;background:#fff;border-right:1px solid #eee6e1;border-bottom:1px solid #eee6e1;font-size:9.4px;letter-spacing:-0.34px;color:#2a2a2a;-webkit-text-stroke:0.05px #2a2a2a;align-items:flex-end;padding-bottom:2.5px">1,700.0</div>
<div class="c t" style="left:981px;top:196px;width:84px;height:18px;background:#fff;border-right:1px solid #eee6e1;border-bottom:1px solid #eee6e1;font-size:9.4px;letter-spacing:-0.34px;color:#2a2a2a;-webkit-text-stroke:0.05px #2a2a2a;align-items:flex-end;padding-bottom:2.5px">1,583.0</div>
<div class="c t" style="left:1065px;top:196px;width:84px;height:18px;background:#fff;border-right:1px solid #eee6e1;border-bottom:1px solid #eee6e1;font-size:9.4px;letter-spacing:-0.34px;color:#2a2a2a;-webkit-text-stroke:0.05px #2a2a2a;align-items:flex-end;padding-bottom:2.5px">1,750.0</div>
<div class="c t" style="left:1149px;top:196px;width:84px;height:18px;background:#fff;border-right:1px solid #eee6e1;border-bottom:1px solid #eee6e1;font-size:9.4px;letter-spacing:-0.34px;color:#2a2a2a;-webkit-text-stroke:0.05px #2a2a2a;align-items:flex-end;padding-bottom:2.5px">1,625.0</div>
<div class="c t" style="left:1233px;top:196px;width:84px;height:18px;background:#fff;border-right:1px solid #eee6e1;border-bottom:1px solid #eee6e1;font-size:9.4px;letter-spacing:-0.34px;color:#2a2a2a;-webkit-text-stroke:0.05px #2a2a2a;align-items:flex-end;padding-bottom:2.5px">1,800.0</div>
<div class="c t" style="left:37px;top:214px;width:71px;height:17px;background:#fdf4ed;border-right:1px solid #e3d6d0;border-bottom:1px solid #e3d6d0;font-size:8.85px;color:#262626;padding-bottom:2px">6</div>
<div class="c t" style="left:108px;top:214px;width:153px;height:17px;background:#fdf4ed;border-right:1px solid #e3d6d0;border-bottom:1px solid #e3d6d0;font-size:8.85px;color:#262626;padding-bottom:2px">Community Engagement</div>
<div class="c t" style="left:261px;top:214px;width:215px;height:17px;background:#fdf4ed;border-right:1px solid #e3d6d0;border-bottom:1px solid #e3d6d0;font-size:8.85px;color:#262626;padding-bottom:2px">Local Community Involvement</div>
<div class="c t" style="left:476px;top:214px;width:84px;height:17px;background:#fdf4ed;border-right:1px solid #e3d6d0;border-bottom:1px solid #e3d6d0;font-size:8.85px;color:#262626;padding-bottom:2px">%</div>
<div class="c t" style="left:560px;top:214px;width:84px;height:17px;background:#fff;border-right:1px solid #eee6e1;border-bottom:1px solid #eee6e1;font-size:9.4px;letter-spacing:-0.34px;color:#2a2a2a;-webkit-text-stroke:0.05px #2a2a2a;align-items:flex-end;padding-bottom:2.5px">100.0</div>
<div class="c t" style="left:644px;top:214px;width:85px;height:17px;background:#fff;border-right:1px solid #eee6e1;border-bottom:1px solid #eee6e1;font-size:9.4px;letter-spacing:-0.34px;color:#2a2a2a;-webkit-text-stroke:0.05px #2a2a2a;align-items:flex-end;padding-bottom:2.5px">100.0</div>
<div class="c t" style="left:729px;top:214px;width:84px;height:17px;background:#fff;border-right:1px solid #eee6e1;border-bottom:1px solid #eee6e1;font-size:9.4px;letter-spacing:-0.34px;color:#2a2a2a;-webkit-text-stroke:0.05px #2a2a2a;align-items:flex-end;padding-bottom:2.5px">105.0</div>
<div class="c t" style="left:813px;top:214px;width:84px;height:17px;background:#fff;border-right:1px solid #eee6e1;border-bottom:1px solid #eee6e1;font-size:9.4px;letter-spacing:-0.34px;color:#2a2a2a;-webkit-text-stroke:0.05px #2a2a2a;align-items:flex-end;padding-bottom:2.5px">102.5</div>
<div class="c t" style="left:897px;top:214px;width:84px;height:17px;background:#fff;border-right:1px solid #eee6e1;border-bottom:1px solid #eee6e1;font-size:9.4px;letter-spacing:-0.34px;color:#2a2a2a;-webkit-text-stroke:0.05px #2a2a2a;align-items:flex-end;padding-bottom:2.5px">110.0</div>
<div class="c t" style="left:981px;top:214px;width:84px;height:17px;background:#fff;border-right:1px solid #eee6e1;border-bottom:1px solid #eee6e1;font-size:9.4px;letter-spacing:-0.34px;color:#2a2a2a;-webkit-text-stroke:0.05px #2a2a2a;align-items:flex-end;padding-bottom:2.5px">104.0</div>
<div class="c t" style="left:1065px;top:214px;width:84px;height:17px;background:#fff;border-right:1px solid #eee6e1;border-bottom:1px solid #eee6e1;font-size:9.4px;letter-spacing:-0.34px;color:#2a2a2a;-webkit-text-stroke:0.05px #2a2a2a;align-items:flex-end;padding-bottom:2.5px">112.0</div>
<div class="c t" style="left:1149px;top:214px;width:84px;height:17px;background:#fff;border-right:1px solid #eee6e1;border-bottom:1px solid #eee6e1;font-size:9.4px;letter-spacing:-0.34px;color:#2a2a2a;-webkit-text-stroke:0.05px #2a2a2a;align-items:flex-end;padding-bottom:2.5px">106.3</div>
<div class="c t" style="left:1233px;top:214px;width:84px;height:17px;background:#fff;border-right:1px solid #eee6e1;border-bottom:1px solid #eee6e1;font-size:9.4px;letter-spacing:-0.34px;color:#2a2a2a;-webkit-text-stroke:0.05px #2a2a2a;align-items:flex-end;padding-bottom:2.5px">115.0</div>
<div class="c t" style="left:37px;top:231px;width:71px;height:17px;background:#fdf4ed;border-right:1px solid #e3d6d0;border-bottom:1px solid #e3d6d0;font-size:8.85px;color:#262626;padding-bottom:2px">7</div>
<div class="c t" style="left:108px;top:231px;width:153px;height:17px;background:#fdf4ed;border-right:1px solid #e3d6d0;border-bottom:1px solid #e3d6d0;font-size:8.85px;color:#262626;padding-bottom:2px">Illegal Activities</div>
<div class="c t" style="left:261px;top:231px;width:215px;height:17px;background:#fdf4ed;border-right:1px solid #e3d6d0;border-bottom:1px solid #e3d6d0;font-size:8.85px;color:#262626;padding-bottom:2px">Incidents of Poaching</div>
<div class="c t" style="left:476px;top:231px;width:84px;height:17px;background:#fdf4ed;border-right:1px solid #e3d6d0;border-bottom:1px solid #e3d6d0;font-size:8.85px;color:#262626;padding-bottom:2px">Count</div>
<div class="c t" style="left:560px;top:231px;width:84px;height:17px;background:#fff;border-right:1px solid #eee6e1;border-bottom:1px solid #eee6e1;font-size:9.4px;letter-spacing:-0.34px;color:#2a2a2a;-webkit-text-stroke:0.05px #2a2a2a;align-items:flex-end;padding-bottom:2.5px">240.0</div>
<div class="c t" style="left:644px;top:231px;width:85px;height:17px;background:#fff;border-right:1px solid #eee6e1;border-bottom:1px solid #eee6e1;font-size:9.4px;letter-spacing:-0.34px;color:#2a2a2a;-webkit-text-stroke:0.05px #2a2a2a;align-items:flex-end;padding-bottom:2.5px">240.0</div>
<div class="c t" style="left:729px;top:231px;width:84px;height:17px;background:#fff;border-right:1px solid #eee6e1;border-bottom:1px solid #eee6e1;font-size:9.4px;letter-spacing:-0.34px;color:#2a2a2a;-webkit-text-stroke:0.05px #2a2a2a;align-items:flex-end;padding-bottom:2.5px">230.0</div>
<div class="c t" style="left:813px;top:231px;width:84px;height:17px;background:#fff;border-right:1px solid #eee6e1;border-bottom:1px solid #eee6e1;font-size:9.4px;letter-spacing:-0.34px;color:#2a2a2a;-webkit-text-stroke:0.05px #2a2a2a;align-items:flex-end;padding-bottom:2.5px">235.0</div>
<div class="c t" style="left:897px;top:231px;width:84px;height:17px;background:#fff;border-right:1px solid #eee6e1;border-bottom:1px solid #eee6e1;font-size:9.4px;letter-spacing:-0.34px;color:#2a2a2a;-webkit-text-stroke:0.05px #2a2a2a;align-items:flex-end;padding-bottom:2.5px">220.0</div>
<div class="c t" style="left:981px;top:231px;width:84px;height:17px;background:#fff;border-right:1px solid #eee6e1;border-bottom:1px solid #eee6e1;font-size:9.4px;letter-spacing:-0.34px;color:#2a2a2a;-webkit-text-stroke:0.05px #2a2a2a;align-items:flex-end;padding-bottom:2.5px">230.0</div>
<div class="c t" style="left:1065px;top:231px;width:84px;height:17px;background:#fff;border-right:1px solid #eee6e1;border-bottom:1px solid #eee6e1;font-size:9.4px;letter-spacing:-0.34px;color:#2a2a2a;-webkit-text-stroke:0.05px #2a2a2a;align-items:flex-end;padding-bottom:2.5px">225.0</div>
<div class="c t" style="left:1149px;top:231px;width:84px;height:17px;background:#fff;border-right:1px solid #eee6e1;border-bottom:1px solid #eee6e1;font-size:9.4px;letter-spacing:-0.34px;color:#2a2a2a;-webkit-text-stroke:0.05px #2a2a2a;align-items:flex-end;padding-bottom:2.5px">232.5</div>
<div class="c t" style="left:1233px;top:231px;width:84px;height:17px;background:#fff;border-right:1px solid #eee6e1;border-bottom:1px solid #eee6e1;font-size:9.4px;letter-spacing:-0.34px;color:#2a2a2a;-webkit-text-stroke:0.05px #2a2a2a;align-items:flex-end;padding-bottom:2.5px">215.0</div>
<div class="c t" style="left:37px;top:248px;width:71px;height:18px;background:#fdf4ed;border-right:1px solid #e3d6d0;border-bottom:1px solid #e3d6d0;font-size:8.85px;color:#262626;padding-bottom:2px">8</div>
<div class="c t" style="left:108px;top:248px;width:153px;height:18px;background:#fdf4ed;border-right:1px solid #e3d6d0;border-bottom:1px solid #e3d6d0;font-size:8.85px;color:#262626;padding-bottom:2px">Wildlife Health</div>
<div class="c t" style="left:261px;top:248px;width:215px;height:18px;background:#fdf4ed;border-right:1px solid #e3d6d0;border-bottom:1px solid #e3d6d0;font-size:8.85px;color:#262626;padding-bottom:2px">Wildlife Disease Outbreaks</div>
<div class="c t" style="left:476px;top:248px;width:84px;height:18px;background:#fdf4ed;border-right:1px solid #e3d6d0;border-bottom:1px solid #e3d6d0;font-size:8.85px;color:#262626;padding-bottom:2px">Count</div>
<div class="c t" style="left:560px;top:248px;width:84px;height:18px;background:#fff;border-right:1px solid #eee6e1;border-bottom:1px solid #eee6e1;font-size:9.4px;letter-spacing:-0.34px;color:#2a2a2a;-webkit-text-stroke:0.05px #2a2a2a;align-items:flex-end;padding-bottom:2.5px">90.0</div>
<div class="c t" style="left:644px;top:248px;width:85px;height:18px;background:#fff;border-right:1px solid #eee6e1;border-bottom:1px solid #eee6e1;font-size:9.4px;letter-spacing:-0.34px;color:#2a2a2a;-webkit-text-stroke:0.05px #2a2a2a;align-items:flex-end;padding-bottom:2.5px">90.0</div>
<div class="c t" style="left:729px;top:248px;width:84px;height:18px;background:#fff;border-right:1px solid #eee6e1;border-bottom:1px solid #eee6e1;font-size:9.4px;letter-spacing:-0.34px;color:#2a2a2a;-webkit-text-stroke:0.05px #2a2a2a;align-items:flex-end;padding-bottom:2.5px">92.0</div>
<div class="c t" style="left:813px;top:248px;width:84px;height:18px;background:#fff;border-right:1px solid #eee6e1;border-bottom:1px solid #eee6e1;font-size:9.4px;letter-spacing:-0.34px;color:#2a2a2a;-webkit-text-stroke:0.05px #2a2a2a;align-items:flex-end;padding-bottom:2.5px">91.0</div>
<div class="c t" style="left:897px;top:248px;width:84px;height:18px;background:#fff;border-right:1px solid #eee6e1;border-bottom:1px solid #eee6e1;font-size:9.4px;letter-spacing:-0.34px;color:#2a2a2a;-webkit-text-stroke:0.05px #2a2a2a;align-items:flex-end;padding-bottom:2.5px">93.0</div>
<div class="c t" style="left:981px;top:248px;width:84px;height:18px;background:#fff;border-right:1px solid #eee6e1;border-bottom:1px solid #eee6e1;font-size:9.4px;letter-spacing:-0.34px;color:#2a2a2a;-webkit-text-stroke:0.05px #2a2a2a;align-items:flex-end;padding-bottom:2.5px">91.5</div>
<div class="c t" style="left:1065px;top:248px;width:84px;height:18px;background:#fff;border-right:1px solid #eee6e1;border-bottom:1px solid #eee6e1;font-size:9.4px;letter-spacing:-0.34px;color:#2a2a2a;-webkit-text-stroke:0.05px #2a2a2a;align-items:flex-end;padding-bottom:2.5px">94.0</div>
<div class="c t" style="left:1149px;top:248px;width:84px;height:18px;background:#fff;border-right:1px solid #eee6e1;border-bottom:1px solid #eee6e1;font-size:9.4px;letter-spacing:-0.34px;color:#2a2a2a;-webkit-text-stroke:0.05px #2a2a2a;align-items:flex-end;padding-bottom:2.5px">91.3</div>
<div class="c t" style="left:1233px;top:248px;width:84px;height:18px;background:#fff;border-right:1px solid #eee6e1;border-bottom:1px solid #eee6e1;font-size:9.4px;letter-spacing:-0.34px;color:#2a2a2a;-webkit-text-stroke:0.05px #2a2a2a;align-items:flex-end;padding-bottom:2.5px">95.0</div>
<div class="c t" style="left:37px;top:266px;width:71px;height:17px;background:#fdf4ed;border-right:1px solid #e3d6d0;border-bottom:1px solid #e3d6d0;font-size:8.85px;color:#262626;padding-bottom:2px">9</div>
<div class="c t" style="left:108px;top:266px;width:153px;height:17px;background:#fdf4ed;border-right:1px solid #e3d6d0;border-bottom:1px solid #e3d6d0;font-size:8.85px;color:#262626;padding-bottom:2px">Ecological Impact</div>
<div class="c t" style="left:261px;top:266px;width:215px;height:17px;background:#fdf4ed;border-right:1px solid #e3d6d0;border-bottom:1px solid #e3d6d0;font-size:8.85px;color:#262626;padding-bottom:2px">Non-native Species Control</div>
<div class="c t" style="left:476px;top:266px;width:84px;height:17px;background:#fdf4ed;border-right:1px solid #e3d6d0;border-bottom:1px solid #e3d6d0;font-size:8.85px;color:#262626;padding-bottom:2px">%</div>
<div class="c t" style="left:560px;top:266px;width:84px;height:17px;background:#fff;border-right:1px solid #eee6e1;border-bottom:1px solid #eee6e1;font-size:9.4px;letter-spacing:-0.34px;color:#2a2a2a;-webkit-text-stroke:0.05px #2a2a2a;align-items:flex-end;padding-bottom:2.5px">80.0</div>
<div class="c t" style="left:644px;top:266px;width:85px;height:17px;background:#fff;border-right:1px solid #eee6e1;border-bottom:1px solid #eee6e1;font-size:9.4px;letter-spacing:-0.34px;color:#2a2a2a;-webkit-text-stroke:0.05px #2a2a2a;align-items:flex-end;padding-bottom:2.5px">80.0</div>
<div class="c t" style="left:729px;top:266px;width:84px;height:17px;background:#fff;border-right:1px solid #eee6e1;border-bottom:1px solid #eee6e1;font-size:9.4px;letter-spacing:-0.34px;color:#2a2a2a;-webkit-text-stroke:0.05px #2a2a2a;align-items:flex-end;padding-bottom:2.5px">85.0</div>
<div class="c t" style="left:813px;top:266px;width:84px;height:17px;background:#fff;border-right:1px solid #eee6e1;border-bottom:1px solid #eee6e1;font-size:9.4px;letter-spacing:-0.34px;color:#2a2a2a;-webkit-text-stroke:0.05px #2a2a2a;align-items:flex-end;padding-bottom:2.5px">82.5</div>
<div class="c t" style="left:897px;top:266px;width:84px;height:17px;background:#fff;border-right:1px solid #eee6e1;border-bottom:1px solid #eee6e1;font-size:9.4px;letter-spacing:-0.34px;color:#2a2a2a;-webkit-text-stroke:0.05px #2a2a2a;align-items:flex-end;padding-bottom:2.5px">87.0</div>
<div class="c t" style="left:981px;top:266px;width:84px;height:17px;background:#fff;border-right:1px solid #eee6e1;border-bottom:1px solid #eee6e1;font-size:9.4px;letter-spacing:-0.34px;color:#2a2a2a;-webkit-text-stroke:0.05px #2a2a2a;align-items:flex-end;padding-bottom:2.5px">83.5</div>
<div class="c t" style="left:1065px;top:266px;width:84px;height:17px;background:#fff;border-right:1px solid #eee6e1;border-bottom:1px solid #eee6e1;font-size:9.4px;letter-spacing:-0.34px;color:#2a2a2a;-webkit-text-stroke:0.05px #2a2a2a;align-items:flex-end;padding-bottom:2.5px">90.0</div>
<div class="c t" style="left:1149px;top:266px;width:84px;height:17px;background:#fff;border-right:1px solid #eee6e1;border-bottom:1px solid #eee6e1;font-size:9.4px;letter-spacing:-0.34px;color:#2a2a2a;-webkit-text-stroke:0.05px #2a2a2a;align-items:flex-end;padding-bottom:2.5px">84.3</div>
<div class="c t" style="left:1233px;top:266px;width:84px;height:17px;background:#fff;border-right:1px solid #eee6e1;border-bottom:1px solid #eee6e1;font-size:9.4px;letter-spacing:-0.34px;color:#2a2a2a;-webkit-text-stroke:0.05px #2a2a2a;align-items:flex-end;padding-bottom:2.5px">92.0</div>
<div class="c t" style="left:37px;top:283px;width:71px;height:17px;background:#fdf4ed;border-right:1px solid #e3d6d0;border-bottom:1px solid #e3d6d0;font-size:8.85px;color:#262626;padding-bottom:2px">10</div>
<div class="c t" style="left:108px;top:283px;width:153px;height:17px;background:#fdf4ed;border-right:1px solid #e3d6d0;border-bottom:1px solid #e3d6d0;font-size:8.85px;color:#262626;padding-bottom:2px">Conservation Education</div>
<div class="c t" style="left:261px;top:283px;width:215px;height:17px;background:#fdf4ed;border-right:1px solid #e3d6d0;border-bottom:1px solid #e3d6d0;font-size:8.85px;color:#262626;padding-bottom:2px">Number of Educational Programs</div>
<div class="c t" style="left:476px;top:283px;width:84px;height:17px;background:#fdf4ed;border-right:1px solid #e3d6d0;border-bottom:1px solid #e3d6d0;font-size:8.85px;color:#262626;padding-bottom:2px">Count</div>
<div class="c t" style="left:560px;top:283px;width:84px;height:17px;background:#fff;border-right:1px solid #eee6e1;border-bottom:1px solid #eee6e1;font-size:9.4px;letter-spacing:-0.34px;color:#2a2a2a;-webkit-text-stroke:0.05px #2a2a2a;align-items:flex-end;padding-bottom:2.5px">10.0</div>
<div class="c t" style="left:644px;top:283px;width:85px;height:17px;background:#fff;border-right:1px solid #eee6e1;border-bottom:1px solid #eee6e1;font-size:9.4px;letter-spacing:-0.34px;color:#2a2a2a;-webkit-text-stroke:0.05px #2a2a2a;align-items:flex-end;padding-bottom:2.5px">10.0</div>
<div class="c t" style="left:729px;top:283px;width:84px;height:17px;background:#fff;border-right:1px solid #eee6e1;border-bottom:1px solid #eee6e1;font-size:9.4px;letter-spacing:-0.34px;color:#2a2a2a;-webkit-text-stroke:0.05px #2a2a2a;align-items:flex-end;padding-bottom:2.5px">12.0</div>
<div class="c t" style="left:813px;top:283px;width:84px;height:17px;background:#fff;border-right:1px solid #eee6e1;border-bottom:1px solid #eee6e1;font-size:9.4px;letter-spacing:-0.34px;color:#2a2a2a;-webkit-text-stroke:0.05px #2a2a2a;align-items:flex-end;padding-bottom:2.5px">11.0</div>
<div class="c t" style="left:897px;top:283px;width:84px;height:17px;background:#fff;border-right:1px solid #eee6e1;border-bottom:1px solid #eee6e1;font-size:9.4px;letter-spacing:-0.34px;color:#2a2a2a;-webkit-text-stroke:0.05px #2a2a2a;align-items:flex-end;padding-bottom:2.5px">13.0</div>
<div class="c t" style="left:981px;top:283px;width:84px;height:17px;background:#fff;border-right:1px solid #eee6e1;border-bottom:1px solid #eee6e1;font-size:9.4px;letter-spacing:-0.34px;color:#2a2a2a;-webkit-text-stroke:0.05px #2a2a2a;align-items:flex-end;padding-bottom:2.5px">11.3</div>
<div class="c t" style="left:1065px;top:283px;width:84px;height:17px;background:#fff;border-right:1px solid #eee6e1;border-bottom:1px solid #eee6e1;font-size:9.4px;letter-spacing:-0.34px;color:#2a2a2a;-webkit-text-stroke:0.05px #2a2a2a;align-items:flex-end;padding-bottom:2.5px">14.0</div>
<div class="c t" style="left:1149px;top:283px;width:84px;height:17px;background:#fff;border-right:1px solid #eee6e1;border-bottom:1px solid #eee6e1;font-size:9.4px;letter-spacing:-0.34px;color:#2a2a2a;-webkit-text-stroke:0.05px #2a2a2a;align-items:flex-end;padding-bottom:2.5px">11.3</div>
<div class="c t" style="left:1233px;top:283px;width:84px;height:17px;background:#fff;border-right:1px solid #eee6e1;border-bottom:1px solid #eee6e1;font-size:9.4px;letter-spacing:-0.34px;color:#2a2a2a;-webkit-text-stroke:0.05px #2a2a2a;align-items:flex-end;padding-bottom:2.5px">15.0</div>
<div class="c t" style="left:37px;top:300px;width:71px;height:18px;background:#fdf4ed;border-right:1px solid #e3d6d0;border-bottom:1px solid #e3d6d0;font-size:8.85px;color:#262626;padding-bottom:2px"></div>
<div class="c t" style="left:108px;top:300px;width:153px;height:18px;background:#fdf4ed;border-right:1px solid #e3d6d0;border-bottom:1px solid #e3d6d0;font-size:8.85px;color:#262626;padding-bottom:2px"></div>
<div class="c t" style="left:261px;top:300px;width:215px;height:18px;background:#fdf4ed;border-right:1px solid #e3d6d0;border-bottom:1px solid #e3d6d0;font-size:8.85px;color:#262626;padding-bottom:2px"></div>
<div class="c t" style="left:476px;top:300px;width:84px;height:18px;background:#fdf4ed;border-right:1px solid #e3d6d0;border-bottom:1px solid #e3d6d0;font-size:8.85px;color:#262626;padding-bottom:2px"></div>
<div class="c t" style="left:560px;top:300px;width:84px;height:18px;background:#fff;border-right:1px solid #eee6e1;border-bottom:1px solid #eee6e1;font-size:9.4px;letter-spacing:-0.34px;color:#2a2a2a;-webkit-text-stroke:0.05px #2a2a2a;align-items:flex-end;padding-bottom:2.5px"></div>
<div class="c t" style="left:644px;top:300px;width:85px;height:18px;background:#fff;border-right:1px solid #eee6e1;border-bottom:1px solid #eee6e1;font-size:9.4px;letter-spacing:-0.34px;color:#2a2a2a;-webkit-text-stroke:0.05px #2a2a2a;align-items:flex-end;padding-bottom:2.5px"></div>
<div class="c t" style="left:729px;top:300px;width:84px;height:18px;background:#fff;border-right:1px solid #eee6e1;border-bottom:1px solid #eee6e1;font-size:9.4px;letter-spacing:-0.34px;color:#2a2a2a;-webkit-text-stroke:0.05px #2a2a2a;align-items:flex-end;padding-bottom:2.5px"></div>
<div class="c t" style="left:813px;top:300px;width:84px;height:18px;background:#fff;border-right:1px solid #eee6e1;border-bottom:1px solid #eee6e1;font-size:9.4px;letter-spacing:-0.34px;color:#2a2a2a;-webkit-text-stroke:0.05px #2a2a2a;align-items:flex-end;padding-bottom:2.5px"></div>
<div class="c t" style="left:897px;top:300px;width:84px;height:18px;background:#fff;border-right:1px solid #eee6e1;border-bottom:1px solid #eee6e1;font-size:9.4px;letter-spacing:-0.34px;color:#2a2a2a;-webkit-text-stroke:0.05px #2a2a2a;align-items:flex-end;padding-bottom:2.5px"></div>
<div class="c t" style="left:981px;top:300px;width:84px;height:18px;background:#fff;border-right:1px solid #eee6e1;border-bottom:1px solid #eee6e1;font-size:9.4px;letter-spacing:-0.34px;color:#2a2a2a;-webkit-text-stroke:0.05px #2a2a2a;align-items:flex-end;padding-bottom:2.5px"></div>
<div class="c t" style="left:1065px;top:300px;width:84px;height:18px;background:#fff;border-right:1px solid #eee6e1;border-bottom:1px solid #eee6e1;font-size:9.4px;letter-spacing:-0.34px;color:#2a2a2a;-webkit-text-stroke:0.05px #2a2a2a;align-items:flex-end;padding-bottom:2.5px"></div>
<div class="c t" style="left:1149px;top:300px;width:84px;height:18px;background:#fff;border-right:1px solid #eee6e1;border-bottom:1px solid #eee6e1;font-size:9.4px;letter-spacing:-0.34px;color:#2a2a2a;-webkit-text-stroke:0.05px #2a2a2a;align-items:flex-end;padding-bottom:2.5px"></div>
<div class="c t" style="left:1233px;top:300px;width:84px;height:18px;background:#fff;border-right:1px solid #eee6e1;border-bottom:1px solid #eee6e1;font-size:9.4px;letter-spacing:-0.34px;color:#2a2a2a;-webkit-text-stroke:0.05px #2a2a2a;align-items:flex-end;padding-bottom:2.5px"></div>
<div class="c t" style="left:37px;top:318px;width:71px;height:17px;background:#fdf4ed;border-right:1px solid #e3d6d0;border-bottom:1px solid #e3d6d0;font-size:8.85px;color:#262626;padding-bottom:2px"></div>
<div class="c t" style="left:108px;top:318px;width:153px;height:17px;background:#fdf4ed;border-right:1px solid #e3d6d0;border-bottom:1px solid #e3d6d0;font-size:8.85px;color:#262626;padding-bottom:2px"></div>
<div class="c t" style="left:261px;top:318px;width:215px;height:17px;background:#fdf4ed;border-right:1px solid #e3d6d0;border-bottom:1px solid #e3d6d0;font-size:8.85px;color:#262626;padding-bottom:2px"></div>
<div class="c t" style="left:476px;top:318px;width:84px;height:17px;background:#fdf4ed;border-right:1px solid #e3d6d0;border-bottom:1px solid #e3d6d0;font-size:8.85px;color:#262626;padding-bottom:2px"></div>
<div class="c t" style="left:560px;top:318px;width:84px;height:17px;background:#fff;border-right:1px solid #eee6e1;border-bottom:1px solid #eee6e1;font-size:9.4px;letter-spacing:-0.34px;color:#2a2a2a;-webkit-text-stroke:0.05px #2a2a2a;align-items:flex-end;padding-bottom:2.5px"></div>
<div class="c t" style="left:644px;top:318px;width:85px;height:17px;background:#fff;border-right:1px solid #eee6e1;border-bottom:1px solid #eee6e1;font-size:9.4px;letter-spacing:-0.34px;color:#2a2a2a;-webkit-text-stroke:0.05px #2a2a2a;align-items:flex-end;padding-bottom:2.5px"></div>
<div class="c t" style="left:729px;top:318px;width:84px;height:17px;background:#fff;border-right:1px solid #eee6e1;border-bottom:1px solid #eee6e1;font-size:9.4px;letter-spacing:-0.34px;color:#2a2a2a;-webkit-text-stroke:0.05px #2a2a2a;align-items:flex-end;padding-bottom:2.5px"></div>
<div class="c t" style="left:813px;top:318px;width:84px;height:17px;background:#fff;border-right:1px solid #eee6e1;border-bottom:1px solid #eee6e1;font-size:9.4px;letter-spacing:-0.34px;color:#2a2a2a;-webkit-text-stroke:0.05px #2a2a2a;align-items:flex-end;padding-bottom:2.5px"></div>
<div class="c t" style="left:897px;top:318px;width:84px;height:17px;background:#fff;border-right:1px solid #eee6e1;border-bottom:1px solid #eee6e1;font-size:9.4px;letter-spacing:-0.34px;color:#2a2a2a;-webkit-text-stroke:0.05px #2a2a2a;align-items:flex-end;padding-bottom:2.5px"></div>
<div class="c t" style="left:981px;top:318px;width:84px;height:17px;background:#fff;border-right:1px solid #eee6e1;border-bottom:1px solid #eee6e1;font-size:9.4px;letter-spacing:-0.34px;color:#2a2a2a;-webkit-text-stroke:0.05px #2a2a2a;align-items:flex-end;padding-bottom:2.5px"></div>
<div class="c t" style="left:1065px;top:318px;width:84px;height:17px;background:#fff;border-right:1px solid #eee6e1;border-bottom:1px solid #eee6e1;font-size:9.4px;letter-spacing:-0.34px;color:#2a2a2a;-webkit-text-stroke:0.05px #2a2a2a;align-items:flex-end;padding-bottom:2.5px"></div>
<div class="c t" style="left:1149px;top:318px;width:84px;height:17px;background:#fff;border-right:1px solid #eee6e1;border-bottom:1px solid #eee6e1;font-size:9.4px;letter-spacing:-0.34px;color:#2a2a2a;-webkit-text-stroke:0.05px #2a2a2a;align-items:flex-end;padding-bottom:2.5px"></div>
<div class="c t" style="left:1233px;top:318px;width:84px;height:17px;background:#fff;border-right:1px solid #eee6e1;border-bottom:1px solid #eee6e1;font-size:9.4px;letter-spacing:-0.34px;color:#2a2a2a;-webkit-text-stroke:0.05px #2a2a2a;align-items:flex-end;padding-bottom:2.5px"></div>
<div class="c t" style="left:37px;top:335px;width:71px;height:17px;background:#fdf4ed;border-right:1px solid #e3d6d0;border-bottom:1px solid #e3d6d0;font-size:8.85px;color:#262626;padding-bottom:2px"></div>
<div class="c t" style="left:108px;top:335px;width:153px;height:17px;background:#fdf4ed;border-right:1px solid #e3d6d0;border-bottom:1px solid #e3d6d0;font-size:8.85px;color:#262626;padding-bottom:2px"></div>
<div class="c t" style="left:261px;top:335px;width:215px;height:17px;background:#fdf4ed;border-right:1px solid #e3d6d0;border-bottom:1px solid #e3d6d0;font-size:8.85px;color:#262626;padding-bottom:2px"></div>
<div class="c t" style="left:476px;top:335px;width:84px;height:17px;background:#fdf4ed;border-right:1px solid #e3d6d0;border-bottom:1px solid #e3d6d0;font-size:8.85px;color:#262626;padding-bottom:2px"></div>
<div class="c t" style="left:560px;top:335px;width:84px;height:17px;background:#fff;border-right:1px solid #eee6e1;border-bottom:1px solid #eee6e1;font-size:9.4px;letter-spacing:-0.34px;color:#2a2a2a;-webkit-text-stroke:0.05px #2a2a2a;align-items:flex-end;padding-bottom:2.5px"></div>
<div class="c t" style="left:644px;top:335px;width:85px;height:17px;background:#fff;border-right:1px solid #eee6e1;border-bottom:1px solid #eee6e1;font-size:9.4px;letter-spacing:-0.34px;color:#2a2a2a;-webkit-text-stroke:0.05px #2a2a2a;align-items:flex-end;padding-bottom:2.5px"></div>
<div class="c t" style="left:729px;top:335px;width:84px;height:17px;background:#fff;border-right:1px solid #eee6e1;border-bottom:1px solid #eee6e1;font-size:9.4px;letter-spacing:-0.34px;color:#2a2a2a;-webkit-text-stroke:0.05px #2a2a2a;align-items:flex-end;padding-bottom:2.5px"></div>
<div class="c t" style="left:813px;top:335px;width:84px;height:17px;background:#fff;border-right:1px solid #eee6e1;border-bottom:1px solid #eee6e1;font-size:9.4px;letter-spacing:-0.34px;color:#2a2a2a;-webkit-text-stroke:0.05px #2a2a2a;align-items:flex-end;padding-bottom:2.5px"></div>
<div class="c t" style="left:897px;top:335px;width:84px;height:17px;background:#fff;border-right:1px solid #eee6e1;border-bottom:1px solid #eee6e1;font-size:9.4px;letter-spacing:-0.34px;color:#2a2a2a;-webkit-text-stroke:0.05px #2a2a2a;align-items:flex-end;padding-bottom:2.5px"></div>
<div class="c t" style="left:981px;top:335px;width:84px;height:17px;background:#fff;border-right:1px solid #eee6e1;border-bottom:1px solid #eee6e1;font-size:9.4px;letter-spacing:-0.34px;color:#2a2a2a;-webkit-text-stroke:0.05px #2a2a2a;align-items:flex-end;padding-bottom:2.5px"></div>
<div class="c t" style="left:1065px;top:335px;width:84px;height:17px;background:#fff;border-right:1px solid #eee6e1;border-bottom:1px solid #eee6e1;font-size:9.4px;letter-spacing:-0.34px;color:#2a2a2a;-webkit-text-stroke:0.05px #2a2a2a;align-items:flex-end;padding-bottom:2.5px"></div>
<div class="c t" style="left:1149px;top:335px;width:84px;height:17px;background:#fff;border-right:1px solid #eee6e1;border-bottom:1px solid #eee6e1;font-size:9.4px;letter-spacing:-0.34px;color:#2a2a2a;-webkit-text-stroke:0.05px #2a2a2a;align-items:flex-end;padding-bottom:2.5px"></div>
<div class="c t" style="left:1233px;top:335px;width:84px;height:17px;background:#fff;border-right:1px solid #eee6e1;border-bottom:1px solid #eee6e1;font-size:9.4px;letter-spacing:-0.34px;color:#2a2a2a;-webkit-text-stroke:0.05px #2a2a2a;align-items:flex-end;padding-bottom:2.5px"></div>
<div class="c t" style="left:37px;top:352px;width:71px;height:18px;background:#fdf4ed;border-right:1px solid #e3d6d0;border-bottom:1px solid #e3d6d0;font-size:8.85px;color:#262626;padding-bottom:2px"></div>
<div class="c t" style="left:108px;top:352px;width:153px;height:18px;background:#fdf4ed;border-right:1px solid #e3d6d0;border-bottom:1px solid #e3d6d0;font-size:8.85px;color:#262626;padding-bottom:2px"></div>
<div class="c t" style="left:261px;top:352px;width:215px;height:18px;background:#fdf4ed;border-right:1px solid #e3d6d0;border-bottom:1px solid #e3d6d0;font-size:8.85px;color:#262626;padding-bottom:2px"></div>
<div class="c t" style="left:476px;top:352px;width:84px;height:18px;background:#fdf4ed;border-right:1px solid #e3d6d0;border-bottom:1px solid #e3d6d0;font-size:8.85px;color:#262626;padding-bottom:2px"></div>
<div class="c t" style="left:560px;top:352px;width:84px;height:18px;background:#fff;border-right:1px solid #eee6e1;border-bottom:1px solid #eee6e1;font-size:9.4px;letter-spacing:-0.34px;color:#2a2a2a;-webkit-text-stroke:0.05px #2a2a2a;align-items:flex-end;padding-bottom:2.5px"></div>
<div class="c t" style="left:644px;top:352px;width:85px;height:18px;background:#fff;border-right:1px solid #eee6e1;border-bottom:1px solid #eee6e1;font-size:9.4px;letter-spacing:-0.34px;color:#2a2a2a;-webkit-text-stroke:0.05px #2a2a2a;align-items:flex-end;padding-bottom:2.5px"></div>
<div class="c t" style="left:729px;top:352px;width:84px;height:18px;background:#fff;border-right:1px solid #eee6e1;border-bottom:1px solid #eee6e1;font-size:9.4px;letter-spacing:-0.34px;color:#2a2a2a;-webkit-text-stroke:0.05px #2a2a2a;align-items:flex-end;padding-bottom:2.5px"></div>
<div class="c t" style="left:813px;top:352px;width:84px;height:18px;background:#fff;border-right:1px solid #eee6e1;border-bottom:1px solid #eee6e1;font-size:9.4px;letter-spacing:-0.34px;color:#2a2a2a;-webkit-text-stroke:0.05px #2a2a2a;align-items:flex-end;padding-bottom:2.5px"></div>
<div class="c t" style="left:897px;top:352px;width:84px;height:18px;background:#fff;border-right:1px solid #eee6e1;border-bottom:1px solid #eee6e1;font-size:9.4px;letter-spacing:-0.34px;color:#2a2a2a;-webkit-text-stroke:0.05px #2a2a2a;align-items:flex-end;padding-bottom:2.5px"></div>
<div class="c t" style="left:981px;top:352px;width:84px;height:18px;background:#fff;border-right:1px solid #eee6e1;border-bottom:1px solid #eee6e1;font-size:9.4px;letter-spacing:-0.34px;color:#2a2a2a;-webkit-text-stroke:0.05px #2a2a2a;align-items:flex-end;padding-bottom:2.5px"></div>
<div class="c t" style="left:1065px;top:352px;width:84px;height:18px;background:#fff;border-right:1px solid #eee6e1;border-bottom:1px solid #eee6e1;font-size:9.4px;letter-spacing:-0.34px;color:#2a2a2a;-webkit-text-stroke:0.05px #2a2a2a;align-items:flex-end;padding-bottom:2.5px"></div>
<div class="c t" style="left:1149px;top:352px;width:84px;height:18px;background:#fff;border-right:1px solid #eee6e1;border-bottom:1px solid #eee6e1;font-size:9.4px;letter-spacing:-0.34px;color:#2a2a2a;-webkit-text-stroke:0.05px #2a2a2a;align-items:flex-end;padding-bottom:2.5px"></div>
<div class="c t" style="left:1233px;top:352px;width:84px;height:18px;background:#fff;border-right:1px solid #eee6e1;border-bottom:1px solid #eee6e1;font-size:9.4px;letter-spacing:-0.34px;color:#2a2a2a;-webkit-text-stroke:0.05px #2a2a2a;align-items:flex-end;padding-bottom:2.5px"></div>
<div class="c t" style="left:37px;top:370px;width:71px;height:17px;background:#fdf4ed;border-right:1px solid #e3d6d0;border-bottom:1px solid #e3d6d0;font-size:8.85px;color:#262626;padding-bottom:2px"></div>
<div class="c t" style="left:108px;top:370px;width:153px;height:17px;background:#fdf4ed;border-right:1px solid #e3d6d0;border-bottom:1px solid #e3d6d0;font-size:8.85px;color:#262626;padding-bottom:2px"></div>
<div class="c t" style="left:261px;top:370px;width:215px;height:17px;background:#fdf4ed;border-right:1px solid #e3d6d0;border-bottom:1px solid #e3d6d0;font-size:8.85px;color:#262626;padding-bottom:2px"></div>
<div class="c t" style="left:476px;top:370px;width:84px;height:17px;background:#fdf4ed;border-right:1px solid #e3d6d0;border-bottom:1px solid #e3d6d0;font-size:8.85px;color:#262626;padding-bottom:2px"></div>
<div class="c t" style="left:560px;top:370px;width:84px;height:17px;background:#fff;border-right:1px solid #eee6e1;border-bottom:1px solid #eee6e1;font-size:9.4px;letter-spacing:-0.34px;color:#2a2a2a;-webkit-text-stroke:0.05px #2a2a2a;align-items:flex-end;padding-bottom:2.5px"></div>
<div class="c t" style="left:644px;top:370px;width:85px;height:17px;background:#fff;border-right:1px solid #eee6e1;border-bottom:1px solid #eee6e1;font-size:9.4px;letter-spacing:-0.34px;color:#2a2a2a;-webkit-text-stroke:0.05px #2a2a2a;align-items:flex-end;padding-bottom:2.5px"></div>
<div class="c t" style="left:729px;top:370px;width:84px;height:17px;background:#fff;border-right:1px solid #eee6e1;border-bottom:1px solid #eee6e1;font-size:9.4px;letter-spacing:-0.34px;color:#2a2a2a;-webkit-text-stroke:0.05px #2a2a2a;align-items:flex-end;padding-bottom:2.5px"></div>
<div class="c t" style="left:813px;top:370px;width:84px;height:17px;background:#fff;border-right:1px solid #eee6e1;border-bottom:1px solid #eee6e1;font-size:9.4px;letter-spacing:-0.34px;color:#2a2a2a;-webkit-text-stroke:0.05px #2a2a2a;align-items:flex-end;padding-bottom:2.5px"></div>
<div class="c t" style="left:897px;top:370px;width:84px;height:17px;background:#fff;border-right:1px solid #eee6e1;border-bottom:1px solid #eee6e1;font-size:9.4px;letter-spacing:-0.34px;color:#2a2a2a;-webkit-text-stroke:0.05px #2a2a2a;align-items:flex-end;padding-bottom:2.5px"></div>
<div class="c t" style="left:981px;top:370px;width:84px;height:17px;background:#fff;border-right:1px solid #eee6e1;border-bottom:1px solid #eee6e1;font-size:9.4px;letter-spacing:-0.34px;color:#2a2a2a;-webkit-text-stroke:0.05px #2a2a2a;align-items:flex-end;padding-bottom:2.5px"></div>
<div class="c t" style="left:1065px;top:370px;width:84px;height:17px;background:#fff;border-right:1px solid #eee6e1;border-bottom:1px solid #eee6e1;font-size:9.4px;letter-spacing:-0.34px;color:#2a2a2a;-webkit-text-stroke:0.05px #2a2a2a;align-items:flex-end;padding-bottom:2.5px"></div>
<div class="c t" style="left:1149px;top:370px;width:84px;height:17px;background:#fff;border-right:1px solid #eee6e1;border-bottom:1px solid #eee6e1;font-size:9.4px;letter-spacing:-0.34px;color:#2a2a2a;-webkit-text-stroke:0.05px #2a2a2a;align-items:flex-end;padding-bottom:2.5px"></div>
<div class="c t" style="left:1233px;top:370px;width:84px;height:17px;background:#fff;border-right:1px solid #eee6e1;border-bottom:1px solid #eee6e1;font-size:9.4px;letter-spacing:-0.34px;color:#2a2a2a;-webkit-text-stroke:0.05px #2a2a2a;align-items:flex-end;padding-bottom:2.5px"></div>
<div class="c t" style="left:37px;top:387px;width:71px;height:18px;background:#fdf4ed;border-right:1px solid #e3d6d0;border-bottom:1px solid #e3d6d0;font-size:8.85px;color:#262626;padding-bottom:2px"></div>
<div class="c t" style="left:108px;top:387px;width:153px;height:18px;background:#fdf4ed;border-right:1px solid #e3d6d0;border-bottom:1px solid #e3d6d0;font-size:8.85px;color:#262626;padding-bottom:2px"></div>
<div class="c t" style="left:261px;top:387px;width:215px;height:18px;background:#fdf4ed;border-right:1px solid #e3d6d0;border-bottom:1px solid #e3d6d0;font-size:8.85px;color:#262626;padding-bottom:2px"></div>
<div class="c t" style="left:476px;top:387px;width:84px;height:18px;background:#fdf4ed;border-right:1px solid #e3d6d0;border-bottom:1px solid #e3d6d0;font-size:8.85px;color:#262626;padding-bottom:2px"></div>
<div class="c t" style="left:560px;top:387px;width:84px;height:18px;background:#fff;border-right:1px solid #eee6e1;border-bottom:1px solid #eee6e1;font-size:9.4px;letter-spacing:-0.34px;color:#2a2a2a;-webkit-text-stroke:0.05px #2a2a2a;align-items:flex-end;padding-bottom:2.5px"></div>
<div class="c t" style="left:644px;top:387px;width:85px;height:18px;background:#fff;border-right:1px solid #eee6e1;border-bottom:1px solid #eee6e1;font-size:9.4px;letter-spacing:-0.34px;color:#2a2a2a;-webkit-text-stroke:0.05px #2a2a2a;align-items:flex-end;padding-bottom:2.5px"></div>
<div class="c t" style="left:729px;top:387px;width:84px;height:18px;background:#fff;border-right:1px solid #eee6e1;border-bottom:1px solid #eee6e1;font-size:9.4px;letter-spacing:-0.34px;color:#2a2a2a;-webkit-text-stroke:0.05px #2a2a2a;align-items:flex-end;padding-bottom:2.5px"></div>
<div class="c t" style="left:813px;top:387px;width:84px;height:18px;background:#fff;border-right:1px solid #eee6e1;border-bottom:1px solid #eee6e1;font-size:9.4px;letter-spacing:-0.34px;color:#2a2a2a;-webkit-text-stroke:0.05px #2a2a2a;align-items:flex-end;padding-bottom:2.5px"></div>
<div class="c t" style="left:897px;top:387px;width:84px;height:18px;background:#fff;border-right:1px solid #eee6e1;border-bottom:1px solid #eee6e1;font-size:9.4px;letter-spacing:-0.34px;color:#2a2a2a;-webkit-text-stroke:0.05px #2a2a2a;align-items:flex-end;padding-bottom:2.5px"></div>
<div class="c t" style="left:981px;top:387px;width:84px;height:18px;background:#fff;border-right:1px solid #eee6e1;border-bottom:1px solid #eee6e1;font-size:9.4px;letter-spacing:-0.34px;color:#2a2a2a;-webkit-text-stroke:0.05px #2a2a2a;align-items:flex-end;padding-bottom:2.5px"></div>
<div class="c t" style="left:1065px;top:387px;width:84px;height:18px;background:#fff;border-right:1px solid #eee6e1;border-bottom:1px solid #eee6e1;font-size:9.4px;letter-spacing:-0.34px;color:#2a2a2a;-webkit-text-stroke:0.05px #2a2a2a;align-items:flex-end;padding-bottom:2.5px"></div>
<div class="c t" style="left:1149px;top:387px;width:84px;height:18px;background:#fff;border-right:1px solid #eee6e1;border-bottom:1px solid #eee6e1;font-size:9.4px;letter-spacing:-0.34px;color:#2a2a2a;-webkit-text-stroke:0.05px #2a2a2a;align-items:flex-end;padding-bottom:2.5px"></div>
<div class="c t" style="left:1233px;top:387px;width:84px;height:18px;background:#fff;border-right:1px solid #eee6e1;border-bottom:1px solid #eee6e1;font-size:9.4px;letter-spacing:-0.34px;color:#2a2a2a;-webkit-text-stroke:0.05px #2a2a2a;align-items:flex-end;padding-bottom:2.5px"></div>
<div class="c t" style="left:37px;top:405px;width:71px;height:17px;background:#fdf4ed;border-right:1px solid #e3d6d0;border-bottom:1px solid #e3d6d0;font-size:8.85px;color:#262626;padding-bottom:2px"></div>
<div class="c t" style="left:108px;top:405px;width:153px;height:17px;background:#fdf4ed;border-right:1px solid #e3d6d0;border-bottom:1px solid #e3d6d0;font-size:8.85px;color:#262626;padding-bottom:2px"></div>
<div class="c t" style="left:261px;top:405px;width:215px;height:17px;background:#fdf4ed;border-right:1px solid #e3d6d0;border-bottom:1px solid #e3d6d0;font-size:8.85px;color:#262626;padding-bottom:2px"></div>
<div class="c t" style="left:476px;top:405px;width:84px;height:17px;background:#fdf4ed;border-right:1px solid #e3d6d0;border-bottom:1px solid #e3d6d0;font-size:8.85px;color:#262626;padding-bottom:2px"></div>
<div class="c t" style="left:560px;top:405px;width:84px;height:17px;background:#fff;border-right:1px solid #eee6e1;border-bottom:1px solid #eee6e1;font-size:9.4px;letter-spacing:-0.34px;color:#2a2a2a;-webkit-text-stroke:0.05px #2a2a2a;align-items:flex-end;padding-bottom:2.5px"></div>
<div class="c t" style="left:644px;top:405px;width:85px;height:17px;background:#fff;border-right:1px solid #eee6e1;border-bottom:1px solid #eee6e1;font-size:9.4px;letter-spacing:-0.34px;color:#2a2a2a;-webkit-text-stroke:0.05px #2a2a2a;align-items:flex-end;padding-bottom:2.5px"></div>
<div class="c t" style="left:729px;top:405px;width:84px;height:17px;background:#fff;border-right:1px solid #eee6e1;border-bottom:1px solid #eee6e1;font-size:9.4px;letter-spacing:-0.34px;color:#2a2a2a;-webkit-text-stroke:0.05px #2a2a2a;align-items:flex-end;padding-bottom:2.5px"></div>
<div class="c t" style="left:813px;top:405px;width:84px;height:17px;background:#fff;border-right:1px solid #eee6e1;border-bottom:1px solid #eee6e1;font-size:9.4px;letter-spacing:-0.34px;color:#2a2a2a;-webkit-text-stroke:0.05px #2a2a2a;align-items:flex-end;padding-bottom:2.5px"></div>
<div class="c t" style="left:897px;top:405px;width:84px;height:17px;background:#fff;border-right:1px solid #eee6e1;border-bottom:1px solid #eee6e1;font-size:9.4px;letter-spacing:-0.34px;color:#2a2a2a;-webkit-text-stroke:0.05px #2a2a2a;align-items:flex-end;padding-bottom:2.5px"></div>
<div class="c t" style="left:981px;top:405px;width:84px;height:17px;background:#fff;border-right:1px solid #eee6e1;border-bottom:1px solid #eee6e1;font-size:9.4px;letter-spacing:-0.34px;color:#2a2a2a;-webkit-text-stroke:0.05px #2a2a2a;align-items:flex-end;padding-bottom:2.5px"></div>
<div class="c t" style="left:1065px;top:405px;width:84px;height:17px;background:#fff;border-right:1px solid #eee6e1;border-bottom:1px solid #eee6e1;font-size:9.4px;letter-spacing:-0.34px;color:#2a2a2a;-webkit-text-stroke:0.05px #2a2a2a;align-items:flex-end;padding-bottom:2.5px"></div>
<div class="c t" style="left:1149px;top:405px;width:84px;height:17px;background:#fff;border-right:1px solid #eee6e1;border-bottom:1px solid #eee6e1;font-size:9.4px;letter-spacing:-0.34px;color:#2a2a2a;-webkit-text-stroke:0.05px #2a2a2a;align-items:flex-end;padding-bottom:2.5px"></div>
<div class="c t" style="left:1233px;top:405px;width:84px;height:17px;background:#fff;border-right:1px solid #eee6e1;border-bottom:1px solid #eee6e1;font-size:9.4px;letter-spacing:-0.34px;color:#2a2a2a;-webkit-text-stroke:0.05px #2a2a2a;align-items:flex-end;padding-bottom:2.5px"></div>
<div class="c t" style="left:37px;top:422px;width:71px;height:17px;background:#fdf4ed;border-right:1px solid #e3d6d0;border-bottom:1px solid #e3d6d0;font-size:8.85px;color:#262626;padding-bottom:2px"></div>
<div class="c t" style="left:108px;top:422px;width:153px;height:17px;background:#fdf4ed;border-right:1px solid #e3d6d0;border-bottom:1px solid #e3d6d0;font-size:8.85px;color:#262626;padding-bottom:2px"></div>
<div class="c t" style="left:261px;top:422px;width:215px;height:17px;background:#fdf4ed;border-right:1px solid #e3d6d0;border-bottom:1px solid #e3d6d0;font-size:8.85px;color:#262626;padding-bottom:2px"></div>
<div class="c t" style="left:476px;top:422px;width:84px;height:17px;background:#fdf4ed;border-right:1px solid #e3d6d0;border-bottom:1px solid #e3d6d0;font-size:8.85px;color:#262626;padding-bottom:2px"></div>
<div class="c t" style="left:560px;top:422px;width:84px;height:17px;background:#fff;border-right:1px solid #eee6e1;border-bottom:1px solid #eee6e1;font-size:9.4px;letter-spacing:-0.34px;color:#2a2a2a;-webkit-text-stroke:0.05px #2a2a2a;align-items:flex-end;padding-bottom:2.5px"></div>
<div class="c t" style="left:644px;top:422px;width:85px;height:17px;background:#fff;border-right:1px solid #eee6e1;border-bottom:1px solid #eee6e1;font-size:9.4px;letter-spacing:-0.34px;color:#2a2a2a;-webkit-text-stroke:0.05px #2a2a2a;align-items:flex-end;padding-bottom:2.5px"></div>
<div class="c t" style="left:729px;top:422px;width:84px;height:17px;background:#fff;border-right:1px solid #eee6e1;border-bottom:1px solid #eee6e1;font-size:9.4px;letter-spacing:-0.34px;color:#2a2a2a;-webkit-text-stroke:0.05px #2a2a2a;align-items:flex-end;padding-bottom:2.5px"></div>
<div class="c t" style="left:813px;top:422px;width:84px;height:17px;background:#fff;border-right:1px solid #eee6e1;border-bottom:1px solid #eee6e1;font-size:9.4px;letter-spacing:-0.34px;color:#2a2a2a;-webkit-text-stroke:0.05px #2a2a2a;align-items:flex-end;padding-bottom:2.5px"></div>
<div class="c t" style="left:897px;top:422px;width:84px;height:17px;background:#fff;border-right:1px solid #eee6e1;border-bottom:1px solid #eee6e1;font-size:9.4px;letter-spacing:-0.34px;color:#2a2a2a;-webkit-text-stroke:0.05px #2a2a2a;align-items:flex-end;padding-bottom:2.5px"></div>
<div class="c t" style="left:981px;top:422px;width:84px;height:17px;background:#fff;border-right:1px solid #eee6e1;border-bottom:1px solid #eee6e1;font-size:9.4px;letter-spacing:-0.34px;color:#2a2a2a;-webkit-text-stroke:0.05px #2a2a2a;align-items:flex-end;padding-bottom:2.5px"></div>
<div class="c t" style="left:1065px;top:422px;width:84px;height:17px;background:#fff;border-right:1px solid #eee6e1;border-bottom:1px solid #eee6e1;font-size:9.4px;letter-spacing:-0.34px;color:#2a2a2a;-webkit-text-stroke:0.05px #2a2a2a;align-items:flex-end;padding-bottom:2.5px"></div>
<div class="c t" style="left:1149px;top:422px;width:84px;height:17px;background:#fff;border-right:1px solid #eee6e1;border-bottom:1px solid #eee6e1;font-size:9.4px;letter-spacing:-0.34px;color:#2a2a2a;-webkit-text-stroke:0.05px #2a2a2a;align-items:flex-end;padding-bottom:2.5px"></div>
<div class="c t" style="left:1233px;top:422px;width:84px;height:17px;background:#fff;border-right:1px solid #eee6e1;border-bottom:1px solid #eee6e1;font-size:9.4px;letter-spacing:-0.34px;color:#2a2a2a;-webkit-text-stroke:0.05px #2a2a2a;align-items:flex-end;padding-bottom:2.5px"></div>
<div class="c t" style="left:37px;top:439px;width:71px;height:18px;background:#fdf4ed;border-right:1px solid #e3d6d0;border-bottom:1px solid #e3d6d0;font-size:8.85px;color:#262626;padding-bottom:2px"></div>
<div class="c t" style="left:108px;top:439px;width:153px;height:18px;background:#fdf4ed;border-right:1px solid #e3d6d0;border-bottom:1px solid #e3d6d0;font-size:8.85px;color:#262626;padding-bottom:2px"></div>
<div class="c t" style="left:261px;top:439px;width:215px;height:18px;background:#fdf4ed;border-right:1px solid #e3d6d0;border-bottom:1px solid #e3d6d0;font-size:8.85px;color:#262626;padding-bottom:2px"></div>
<div class="c t" style="left:476px;top:439px;width:84px;height:18px;background:#fdf4ed;border-right:1px solid #e3d6d0;border-bottom:1px solid #e3d6d0;font-size:8.85px;color:#262626;padding-bottom:2px"></div>
<div class="c t" style="left:560px;top:439px;width:84px;height:18px;background:#fff;border-right:1px solid #eee6e1;border-bottom:1px solid #eee6e1;font-size:9.4px;letter-spacing:-0.34px;color:#2a2a2a;-webkit-text-stroke:0.05px #2a2a2a;align-items:flex-end;padding-bottom:2.5px"></div>
<div class="c t" style="left:644px;top:439px;width:85px;height:18px;background:#fff;border-right:1px solid #eee6e1;border-bottom:1px solid #eee6e1;font-size:9.4px;letter-spacing:-0.34px;color:#2a2a2a;-webkit-text-stroke:0.05px #2a2a2a;align-items:flex-end;padding-bottom:2.5px"></div>
<div class="c t" style="left:729px;top:439px;width:84px;height:18px;background:#fff;border-right:1px solid #eee6e1;border-bottom:1px solid #eee6e1;font-size:9.4px;letter-spacing:-0.34px;color:#2a2a2a;-webkit-text-stroke:0.05px #2a2a2a;align-items:flex-end;padding-bottom:2.5px"></div>
<div class="c t" style="left:813px;top:439px;width:84px;height:18px;background:#fff;border-right:1px solid #eee6e1;border-bottom:1px solid #eee6e1;font-size:9.4px;letter-spacing:-0.34px;color:#2a2a2a;-webkit-text-stroke:0.05px #2a2a2a;align-items:flex-end;padding-bottom:2.5px"></div>
<div class="c t" style="left:897px;top:439px;width:84px;height:18px;background:#fff;border-right:1px solid #eee6e1;border-bottom:1px solid #eee6e1;font-size:9.4px;letter-spacing:-0.34px;color:#2a2a2a;-webkit-text-stroke:0.05px #2a2a2a;align-items:flex-end;padding-bottom:2.5px"></div>
<div class="c t" style="left:981px;top:439px;width:84px;height:18px;background:#fff;border-right:1px solid #eee6e1;border-bottom:1px solid #eee6e1;font-size:9.4px;letter-spacing:-0.34px;color:#2a2a2a;-webkit-text-stroke:0.05px #2a2a2a;align-items:flex-end;padding-bottom:2.5px"></div>
<div class="c t" style="left:1065px;top:439px;width:84px;height:18px;background:#fff;border-right:1px solid #eee6e1;border-bottom:1px solid #eee6e1;font-size:9.4px;letter-spacing:-0.34px;color:#2a2a2a;-webkit-text-stroke:0.05px #2a2a2a;align-items:flex-end;padding-bottom:2.5px"></div>
<div class="c t" style="left:1149px;top:439px;width:84px;height:18px;background:#fff;border-right:1px solid #eee6e1;border-bottom:1px solid #eee6e1;font-size:9.4px;letter-spacing:-0.34px;color:#2a2a2a;-webkit-text-stroke:0.05px #2a2a2a;align-items:flex-end;padding-bottom:2.5px"></div>
<div class="c t" style="left:1233px;top:439px;width:84px;height:18px;background:#fff;border-right:1px solid #eee6e1;border-bottom:1px solid #eee6e1;font-size:9.4px;letter-spacing:-0.34px;color:#2a2a2a;-webkit-text-stroke:0.05px #2a2a2a;align-items:flex-end;padding-bottom:2.5px"></div>
<div class="c t" style="left:37px;top:457px;width:71px;height:17px;background:#fdf4ed;border-right:1px solid #e3d6d0;border-bottom:1px solid #e3d6d0;font-size:8.85px;color:#262626;padding-bottom:2px"></div>
<div class="c t" style="left:108px;top:457px;width:153px;height:17px;background:#fdf4ed;border-right:1px solid #e3d6d0;border-bottom:1px solid #e3d6d0;font-size:8.85px;color:#262626;padding-bottom:2px"></div>
<div class="c t" style="left:261px;top:457px;width:215px;height:17px;background:#fdf4ed;border-right:1px solid #e3d6d0;border-bottom:1px solid #e3d6d0;font-size:8.85px;color:#262626;padding-bottom:2px"></div>
<div class="c t" style="left:476px;top:457px;width:84px;height:17px;background:#fdf4ed;border-right:1px solid #e3d6d0;border-bottom:1px solid #e3d6d0;font-size:8.85px;color:#262626;padding-bottom:2px"></div>
<div class="c t" style="left:560px;top:457px;width:84px;height:17px;background:#fff;border-right:1px solid #eee6e1;border-bottom:1px solid #eee6e1;font-size:9.4px;letter-spacing:-0.34px;color:#2a2a2a;-webkit-text-stroke:0.05px #2a2a2a;align-items:flex-end;padding-bottom:2.5px"></div>
<div class="c t" style="left:644px;top:457px;width:85px;height:17px;background:#fff;border-right:1px solid #eee6e1;border-bottom:1px solid #eee6e1;font-size:9.4px;letter-spacing:-0.34px;color:#2a2a2a;-webkit-text-stroke:0.05px #2a2a2a;align-items:flex-end;padding-bottom:2.5px"></div>
<div class="c t" style="left:729px;top:457px;width:84px;height:17px;background:#fff;border-right:1px solid #eee6e1;border-bottom:1px solid #eee6e1;font-size:9.4px;letter-spacing:-0.34px;color:#2a2a2a;-webkit-text-stroke:0.05px #2a2a2a;align-items:flex-end;padding-bottom:2.5px"></div>
<div class="c t" style="left:813px;top:457px;width:84px;height:17px;background:#fff;border-right:1px solid #eee6e1;border-bottom:1px solid #eee6e1;font-size:9.4px;letter-spacing:-0.34px;color:#2a2a2a;-webkit-text-stroke:0.05px #2a2a2a;align-items:flex-end;padding-bottom:2.5px"></div>
<div class="c t" style="left:897px;top:457px;width:84px;height:17px;background:#fff;border-right:1px solid #eee6e1;border-bottom:1px solid #eee6e1;font-size:9.4px;letter-spacing:-0.34px;color:#2a2a2a;-webkit-text-stroke:0.05px #2a2a2a;align-items:flex-end;padding-bottom:2.5px"></div>
<div class="c t" style="left:981px;top:457px;width:84px;height:17px;background:#fff;border-right:1px solid #eee6e1;border-bottom:1px solid #eee6e1;font-size:9.4px;letter-spacing:-0.34px;color:#2a2a2a;-webkit-text-stroke:0.05px #2a2a2a;align-items:flex-end;padding-bottom:2.5px"></div>
<div class="c t" style="left:1065px;top:457px;width:84px;height:17px;background:#fff;border-right:1px solid #eee6e1;border-bottom:1px solid #eee6e1;font-size:9.4px;letter-spacing:-0.34px;color:#2a2a2a;-webkit-text-stroke:0.05px #2a2a2a;align-items:flex-end;padding-bottom:2.5px"></div>
<div class="c t" style="left:1149px;top:457px;width:84px;height:17px;background:#fff;border-right:1px solid #eee6e1;border-bottom:1px solid #eee6e1;font-size:9.4px;letter-spacing:-0.34px;color:#2a2a2a;-webkit-text-stroke:0.05px #2a2a2a;align-items:flex-end;padding-bottom:2.5px"></div>
<div class="c t" style="left:1233px;top:457px;width:84px;height:17px;background:#fff;border-right:1px solid #eee6e1;border-bottom:1px solid #eee6e1;font-size:9.4px;letter-spacing:-0.34px;color:#2a2a2a;-webkit-text-stroke:0.05px #2a2a2a;align-items:flex-end;padding-bottom:2.5px"></div>
<div class="c t" style="left:37px;top:474px;width:71px;height:17px;background:#fdf4ed;border-right:1px solid #e3d6d0;border-bottom:1px solid #e3d6d0;font-size:8.85px;color:#262626;padding-bottom:2px"></div>
<div class="c t" style="left:108px;top:474px;width:153px;height:17px;background:#fdf4ed;border-right:1px solid #e3d6d0;border-bottom:1px solid #e3d6d0;font-size:8.85px;color:#262626;padding-bottom:2px"></div>
<div class="c t" style="left:261px;top:474px;width:215px;height:17px;background:#fdf4ed;border-right:1px solid #e3d6d0;border-bottom:1px solid #e3d6d0;font-size:8.85px;color:#262626;padding-bottom:2px"></div>
<div class="c t" style="left:476px;top:474px;width:84px;height:17px;background:#fdf4ed;border-right:1px solid #e3d6d0;border-bottom:1px solid #e3d6d0;font-size:8.85px;color:#262626;padding-bottom:2px"></div>
<div class="c t" style="left:560px;top:474px;width:84px;height:17px;background:#fff;border-right:1px solid #eee6e1;border-bottom:1px solid #eee6e1;font-size:9.4px;letter-spacing:-0.34px;color:#2a2a2a;-webkit-text-stroke:0.05px #2a2a2a;align-items:flex-end;padding-bottom:2.5px"></div>
<div class="c t" style="left:644px;top:474px;width:85px;height:17px;background:#fff;border-right:1px solid #eee6e1;border-bottom:1px solid #eee6e1;font-size:9.4px;letter-spacing:-0.34px;color:#2a2a2a;-webkit-text-stroke:0.05px #2a2a2a;align-items:flex-end;padding-bottom:2.5px"></div>
<div class="c t" style="left:729px;top:474px;width:84px;height:17px;background:#fff;border-right:1px solid #eee6e1;border-bottom:1px solid #eee6e1;font-size:9.4px;letter-spacing:-0.34px;color:#2a2a2a;-webkit-text-stroke:0.05px #2a2a2a;align-items:flex-end;padding-bottom:2.5px"></div>
<div class="c t" style="left:813px;top:474px;width:84px;height:17px;background:#fff;border-right:1px solid #eee6e1;border-bottom:1px solid #eee6e1;font-size:9.4px;letter-spacing:-0.34px;color:#2a2a2a;-webkit-text-stroke:0.05px #2a2a2a;align-items:flex-end;padding-bottom:2.5px"></div>
<div class="c t" style="left:897px;top:474px;width:84px;height:17px;background:#fff;border-right:1px solid #eee6e1;border-bottom:1px solid #eee6e1;font-size:9.4px;letter-spacing:-0.34px;color:#2a2a2a;-webkit-text-stroke:0.05px #2a2a2a;align-items:flex-end;padding-bottom:2.5px"></div>
<div class="c t" style="left:981px;top:474px;width:84px;height:17px;background:#fff;border-right:1px solid #eee6e1;border-bottom:1px solid #eee6e1;font-size:9.4px;letter-spacing:-0.34px;color:#2a2a2a;-webkit-text-stroke:0.05px #2a2a2a;align-items:flex-end;padding-bottom:2.5px"></div>
<div class="c t" style="left:1065px;top:474px;width:84px;height:17px;background:#fff;border-right:1px solid #eee6e1;border-bottom:1px solid #eee6e1;font-size:9.4px;letter-spacing:-0.34px;color:#2a2a2a;-webkit-text-stroke:0.05px #2a2a2a;align-items:flex-end;padding-bottom:2.5px"></div>
<div class="c t" style="left:1149px;top:474px;width:84px;height:17px;background:#fff;border-right:1px solid #eee6e1;border-bottom:1px solid #eee6e1;font-size:9.4px;letter-spacing:-0.34px;color:#2a2a2a;-webkit-text-stroke:0.05px #2a2a2a;align-items:flex-end;padding-bottom:2.5px"></div>
<div class="c t" style="left:1233px;top:474px;width:84px;height:17px;background:#fff;border-right:1px solid #eee6e1;border-bottom:1px solid #eee6e1;font-size:9.4px;letter-spacing:-0.34px;color:#2a2a2a;-webkit-text-stroke:0.05px #2a2a2a;align-items:flex-end;padding-bottom:2.5px"></div>
<div class="c t" style="left:37px;top:491px;width:71px;height:18px;background:#fdf4ed;border-right:1px solid #e3d6d0;border-bottom:1px solid #e3d6d0;font-size:8.85px;color:#262626;padding-bottom:2px"></div>
<div class="c t" style="left:108px;top:491px;width:153px;height:18px;background:#fdf4ed;border-right:1px solid #e3d6d0;border-bottom:1px solid #e3d6d0;font-size:8.85px;color:#262626;padding-bottom:2px"></div>
<div class="c t" style="left:261px;top:491px;width:215px;height:18px;background:#fdf4ed;border-right:1px solid #e3d6d0;border-bottom:1px solid #e3d6d0;font-size:8.85px;color:#262626;padding-bottom:2px"></div>
<div class="c t" style="left:476px;top:491px;width:84px;height:18px;background:#fdf4ed;border-right:1px solid #e3d6d0;border-bottom:1px solid #e3d6d0;font-size:8.85px;color:#262626;padding-bottom:2px"></div>
<div class="c t" style="left:560px;top:491px;width:84px;height:18px;background:#fff;border-right:1px solid #eee6e1;border-bottom:1px solid #eee6e1;font-size:9.4px;letter-spacing:-0.34px;color:#2a2a2a;-webkit-text-stroke:0.05px #2a2a2a;align-items:flex-end;padding-bottom:2.5px"></div>
<div class="c t" style="left:644px;top:491px;width:85px;height:18px;background:#fff;border-right:1px solid #eee6e1;border-bottom:1px solid #eee6e1;font-size:9.4px;letter-spacing:-0.34px;color:#2a2a2a;-webkit-text-stroke:0.05px #2a2a2a;align-items:flex-end;padding-bottom:2.5px"></div>
<div class="c t" style="left:729px;top:491px;width:84px;height:18px;background:#fff;border-right:1px solid #eee6e1;border-bottom:1px solid #eee6e1;font-size:9.4px;letter-spacing:-0.34px;color:#2a2a2a;-webkit-text-stroke:0.05px #2a2a2a;align-items:flex-end;padding-bottom:2.5px"></div>
<div class="c t" style="left:813px;top:491px;width:84px;height:18px;background:#fff;border-right:1px solid #eee6e1;border-bottom:1px solid #eee6e1;font-size:9.4px;letter-spacing:-0.34px;color:#2a2a2a;-webkit-text-stroke:0.05px #2a2a2a;align-items:flex-end;padding-bottom:2.5px"></div>
<div class="c t" style="left:897px;top:491px;width:84px;height:18px;background:#fff;border-right:1px solid #eee6e1;border-bottom:1px solid #eee6e1;font-size:9.4px;letter-spacing:-0.34px;color:#2a2a2a;-webkit-text-stroke:0.05px #2a2a2a;align-items:flex-end;padding-bottom:2.5px"></div>
<div class="c t" style="left:981px;top:491px;width:84px;height:18px;background:#fff;border-right:1px solid #eee6e1;border-bottom:1px solid #eee6e1;font-size:9.4px;letter-spacing:-0.34px;color:#2a2a2a;-webkit-text-stroke:0.05px #2a2a2a;align-items:flex-end;padding-bottom:2.5px"></div>
<div class="c t" style="left:1065px;top:491px;width:84px;height:18px;background:#fff;border-right:1px solid #eee6e1;border-bottom:1px solid #eee6e1;font-size:9.4px;letter-spacing:-0.34px;color:#2a2a2a;-webkit-text-stroke:0.05px #2a2a2a;align-items:flex-end;padding-bottom:2.5px"></div>
<div class="c t" style="left:1149px;top:491px;width:84px;height:18px;background:#fff;border-right:1px solid #eee6e1;border-bottom:1px solid #eee6e1;font-size:9.4px;letter-spacing:-0.34px;color:#2a2a2a;-webkit-text-stroke:0.05px #2a2a2a;align-items:flex-end;padding-bottom:2.5px"></div>
<div class="c t" style="left:1233px;top:491px;width:84px;height:18px;background:#fff;border-right:1px solid #eee6e1;border-bottom:1px solid #eee6e1;font-size:9.4px;letter-spacing:-0.34px;color:#2a2a2a;-webkit-text-stroke:0.05px #2a2a2a;align-items:flex-end;padding-bottom:2.5px"></div>
<div class="c t" style="left:37px;top:509px;width:71px;height:17px;background:#fdf4ed;border-right:1px solid #e3d6d0;border-bottom:1px solid #e3d6d0;font-size:8.85px;color:#262626;padding-bottom:2px"></div>
<div class="c t" style="left:108px;top:509px;width:153px;height:17px;background:#fdf4ed;border-right:1px solid #e3d6d0;border-bottom:1px solid #e3d6d0;font-size:8.85px;color:#262626;padding-bottom:2px"></div>
<div class="c t" style="left:261px;top:509px;width:215px;height:17px;background:#fdf4ed;border-right:1px solid #e3d6d0;border-bottom:1px solid #e3d6d0;font-size:8.85px;color:#262626;padding-bottom:2px"></div>
<div class="c t" style="left:476px;top:509px;width:84px;height:17px;background:#fdf4ed;border-right:1px solid #e3d6d0;border-bottom:1px solid #e3d6d0;font-size:8.85px;color:#262626;padding-bottom:2px"></div>
<div class="c t" style="left:560px;top:509px;width:84px;height:17px;background:#fff;border-right:1px solid #eee6e1;border-bottom:1px solid #eee6e1;font-size:9.4px;letter-spacing:-0.34px;color:#2a2a2a;-webkit-text-stroke:0.05px #2a2a2a;align-items:flex-end;padding-bottom:2.5px"></div>
<div class="c t" style="left:644px;top:509px;width:85px;height:17px;background:#fff;border-right:1px solid #eee6e1;border-bottom:1px solid #eee6e1;font-size:9.4px;letter-spacing:-0.34px;color:#2a2a2a;-webkit-text-stroke:0.05px #2a2a2a;align-items:flex-end;padding-bottom:2.5px"></div>
<div class="c t" style="left:729px;top:509px;width:84px;height:17px;background:#fff;border-right:1px solid #eee6e1;border-bottom:1px solid #eee6e1;font-size:9.4px;letter-spacing:-0.34px;color:#2a2a2a;-webkit-text-stroke:0.05px #2a2a2a;align-items:flex-end;padding-bottom:2.5px"></div>
<div class="c t" style="left:813px;top:509px;width:84px;height:17px;background:#fff;border-right:1px solid #eee6e1;border-bottom:1px solid #eee6e1;font-size:9.4px;letter-spacing:-0.34px;color:#2a2a2a;-webkit-text-stroke:0.05px #2a2a2a;align-items:flex-end;padding-bottom:2.5px"></div>
<div class="c t" style="left:897px;top:509px;width:84px;height:17px;background:#fff;border-right:1px solid #eee6e1;border-bottom:1px solid #eee6e1;font-size:9.4px;letter-spacing:-0.34px;color:#2a2a2a;-webkit-text-stroke:0.05px #2a2a2a;align-items:flex-end;padding-bottom:2.5px"></div>
<div class="c t" style="left:981px;top:509px;width:84px;height:17px;background:#fff;border-right:1px solid #eee6e1;border-bottom:1px solid #eee6e1;font-size:9.4px;letter-spacing:-0.34px;color:#2a2a2a;-webkit-text-stroke:0.05px #2a2a2a;align-items:flex-end;padding-bottom:2.5px"></div>
<div class="c t" style="left:1065px;top:509px;width:84px;height:17px;background:#fff;border-right:1px solid #eee6e1;border-bottom:1px solid #eee6e1;font-size:9.4px;letter-spacing:-0.34px;color:#2a2a2a;-webkit-text-stroke:0.05px #2a2a2a;align-items:flex-end;padding-bottom:2.5px"></div>
<div class="c t" style="left:1149px;top:509px;width:84px;height:17px;background:#fff;border-right:1px solid #eee6e1;border-bottom:1px solid #eee6e1;font-size:9.4px;letter-spacing:-0.34px;color:#2a2a2a;-webkit-text-stroke:0.05px #2a2a2a;align-items:flex-end;padding-bottom:2.5px"></div>
<div class="c t" style="left:1233px;top:509px;width:84px;height:17px;background:#fff;border-right:1px solid #eee6e1;border-bottom:1px solid #eee6e1;font-size:9.4px;letter-spacing:-0.34px;color:#2a2a2a;-webkit-text-stroke:0.05px #2a2a2a;align-items:flex-end;padding-bottom:2.5px"></div>
<div class="ab" style="left:727px;top:352px;width:85px;height:18px;border:2px solid #4f7fcf"></div>
<div class="ab" style="left:808.3px;top:365.4px;width:7.2px;height:7.2px;border-radius:50%;background:#1d56c4"></div>
</div>
<div class="ab" style="left:1271px;top:57px;width:9px;height:468px;background:#fff"></div>
<div class="ab" style="left:1270px;top:57px;width:1px;height:469px;background:#e6e6e6"></div>
<div class="ab" style="left:1271px;top:127px;width:11px;height:21px;background:#dadce0;border-radius:5px"></div>
<div class="ab" style="left:0;top:526px;width:1280px;height:11px;background:#fff"></div>
<div class="ab" style="left:0;top:526px;width:37px;height:11px;background:#f8f9fa;border-right:1px solid #e0e0e0"></div>
<div class="ab" style="left:39px;top:528.3px;width:584px;height:7.2px;background:#dadce0;border-radius:4px"></div>
<div class="ab" style="left:1271px;top:500px;width:9px;height:25px;background:#f8f8f8;border-left:1px solid #ececec"></div>
<svg class="ico" style="left:1271px;top:500px" width="9" height="25" viewBox="0 0 9 25"><path d="M2 7.8H8L5 4.8Z M2 19H8L5 22Z" fill="#8a8a8a"/></svg>
<div class="ab" style="left:1246px;top:527px;width:25px;height:9px;background:#f8f8f8;border-left:1px solid #ececec"></div>
<div class="ab" style="left:1259px;top:527px;width:1px;height:9px;background:#e3e3e3"></div>
<svg class="ico" style="left:1246px;top:527px" width="25" height="9" viewBox="0 0 25 9"><path d="M7.5 1.5V7.5L4.5 4.5Z M18.5 1.5V7.5L21.5 4.5Z" fill="#8a8a8a"/></svg>
<div class="ab" style="left:0;top:537px;width:1280px;height:23px;background:#f9fbfd;border-top:1px solid #e3e3e3"></div>
<div class="ab" style="left:284.6px;top:537px;width:140.8px;height:23px;background:#e1e9f7"></div>
<svg class="ico" style="left:44px;top:548px" width="12" height="11" viewBox="0 0 12 11"><path d="M1.5 5.1H9.9M5.7 0.9V9.3" stroke="#444746" stroke-width="1.3"/></svg>
<svg class="ico" style="left:77px;top:548px" width="12" height="10" viewBox="0 0 12 10"><path d="M0 1.5h11.6M0 4.8h11.6M0 8h11.6" stroke="#444746" stroke-width="1.2"/></svg>
<div class="ab" style="left:120.7px;top:546px;width:81.6px;font-size:12.7px;line-height:14px;letter-spacing:-0.06px;color:#444746;font-weight:normal;white-space:nowrap">Dashboard</div>
<svg class="ico" style="left:192.1px;top:551px" width="7" height="4" viewBox="0 0 7 4"><path d="M0 0h7L3.5 3.8z" fill="#444746"/></svg>
<div class="ab" style="left:220.3px;top:546px;width:58.3px;font-size:12.7px;line-height:14px;letter-spacing:-0.13px;color:#444746;font-weight:normal;white-space:nowrap">Trends</div>
<svg class="ico" style="left:267.5px;top:551px" width="7" height="4" viewBox="0 0 7 4"><path d="M0 0h7L3.5 3.8z" fill="#444746"/></svg>
<div class="ab" style="left:294.7px;top:546px;width:125.3px;font-size:12.7px;line-height:14px;letter-spacing:0px;color:#0b57d0;font-weight:bold;white-space:nowrap">KPI Input - Actual</div>
<svg class="ico" style="left:409.5px;top:551px" width="7" height="4" viewBox="0 0 7 4"><path d="M0 0h7L3.5 3.8z" fill="#0b57d0"/></svg>
<div class="ab" style="left:436.2px;top:546px;width:121.7px;font-size:12.7px;line-height:14px;letter-spacing:0.18px;color:#444746;font-weight:normal;white-space:nowrap">KPI Input - Target</div>
<svg class="ico" style="left:548.0px;top:551px" width="7" height="4" viewBox="0 0 7 4"><path d="M0 0h7L3.5 3.8z" fill="#444746"/></svg>
<div class="ab" style="left:574.5px;top:546px;width:99px;font-size:12.7px;line-height:14px;letter-spacing:-0.11px;color:#444746;font-weight:normal;white-space:nowrap">KPI Input - PY</div>
<svg class="ico" style="left:663.5px;top:551px" width="7" height="4" viewBox="0 0 7 4"><path d="M0 0h7L3.5 3.8z" fill="#444746"/></svg>
<div class="ab" style="left:691.3px;top:546px;width:97.2px;font-size:12.7px;line-height:14px;letter-spacing:0.02px;color:#444746;font-weight:normal;white-space:nowrap">KPI Definition</div>
<svg class="ico" style="left:778.5px;top:551px" width="7" height="4" viewBox="0 0 7 4"><path d="M0 0h7L3.5 3.8z" fill="#444746"/></svg>
<div class="ab" style="left:805.6px;top:546px;width:65.6px;font-size:12.7px;line-height:14px;letter-spacing:0.17px;color:#444746;font-weight:normal;white-space:nowrap">Support</div>
<svg class="ico" style="left:860.5px;top:551px" width="7" height="4" viewBox="0 0 7 4"><path d="M0 0h7L3.5 3.8z" fill="#444746"/></svg>
</body></html>
